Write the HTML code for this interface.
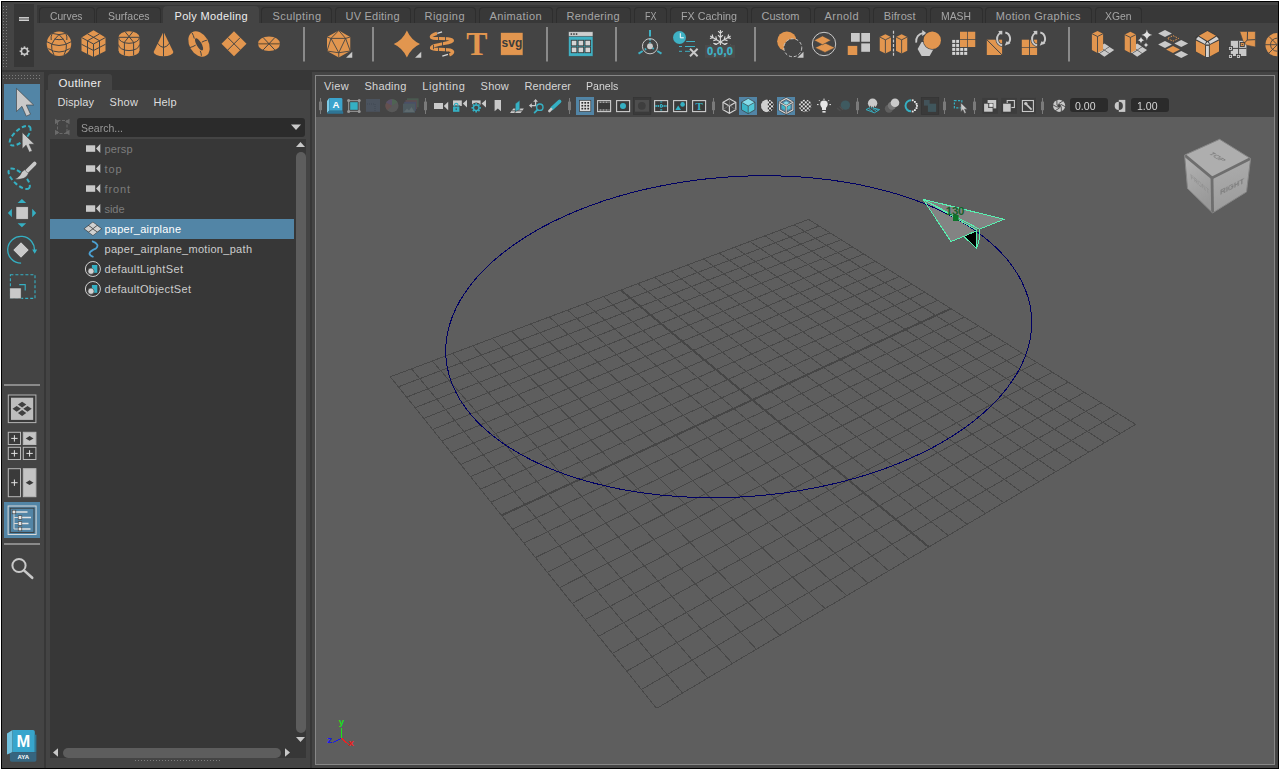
<!DOCTYPE html><html><head><meta charset="utf-8"><title>Maya</title><style>html,body{margin:0;padding:0}body{width:1280px;height:770px;background:#fff;position:relative;overflow:hidden;font-family:"Liberation Sans",sans-serif}</style></head><body>
<div style="position:absolute;left:1px;top:1px;width:1278px;height:768px;background:#000;"></div>
<div style="position:absolute;left:2px;top:2px;width:1276px;height:766px;background:#444;"></div>
<div style="position:absolute;left:14px;top:4px;width:20px;height:63px;background:#373737;"></div>
<div style="position:absolute;left:37px;top:5px;width:1241px;height:18px;background:#383838;"></div>
<div style="position:absolute;left:39px;top:7px;width:54px;height:15px;background:#383838;border:1px solid #2e2e2e;border-bottom:none;border-radius:4px 4px 0 0;"></div>
<span style="position:absolute;left:50.00px;top:6.19px;line-height:20px;font-size:11px;font-family:'Liberation Sans',sans-serif;color:#a6a6a6;letter-spacing:0.000px;white-space:pre;transform:scaleX(0.9328);transform-origin:0 0;">Curves</span>
<div style="position:absolute;left:96px;top:7px;width:63px;height:15px;background:#383838;border:1px solid #2e2e2e;border-bottom:none;border-radius:4px 4px 0 0;"></div>
<span style="position:absolute;left:108.00px;top:6.19px;line-height:20px;font-size:11px;font-family:'Liberation Sans',sans-serif;color:#a6a6a6;letter-spacing:0.000px;white-space:pre;transform:scaleX(0.9560);transform-origin:0 0;">Surfaces</span>
<div style="position:absolute;left:163px;top:6px;width:96px;height:17px;background:#444;border-radius:4px 4px 0 0;"></div>
<span style="position:absolute;left:174.50px;top:6.19px;line-height:20px;font-size:11px;font-family:'Liberation Sans',sans-serif;color:#eeeeee;letter-spacing:0.325px;white-space:pre;">Poly Modeling</span>
<div style="position:absolute;left:261px;top:7px;width:69px;height:15px;background:#383838;border:1px solid #2e2e2e;border-bottom:none;border-radius:4px 4px 0 0;"></div>
<span style="position:absolute;left:272.50px;top:6.19px;line-height:20px;font-size:11px;font-family:'Liberation Sans',sans-serif;color:#a6a6a6;letter-spacing:0.406px;white-space:pre;">Sculpting</span>
<div style="position:absolute;left:335px;top:7px;width:74px;height:15px;background:#383838;border:1px solid #2e2e2e;border-bottom:none;border-radius:4px 4px 0 0;"></div>
<span style="position:absolute;left:345.50px;top:6.19px;line-height:20px;font-size:11px;font-family:'Liberation Sans',sans-serif;color:#a6a6a6;letter-spacing:0.225px;white-space:pre;">UV Editing</span>
<div style="position:absolute;left:414px;top:7px;width:60px;height:15px;background:#383838;border:1px solid #2e2e2e;border-bottom:none;border-radius:4px 4px 0 0;"></div>
<span style="position:absolute;left:424.50px;top:6.19px;line-height:20px;font-size:11px;font-family:'Liberation Sans',sans-serif;color:#a6a6a6;letter-spacing:0.450px;white-space:pre;">Rigging</span>
<div style="position:absolute;left:479px;top:7px;width:72px;height:15px;background:#383838;border:1px solid #2e2e2e;border-bottom:none;border-radius:4px 4px 0 0;"></div>
<span style="position:absolute;left:489.50px;top:6.19px;line-height:20px;font-size:11px;font-family:'Liberation Sans',sans-serif;color:#a6a6a6;letter-spacing:0.386px;white-space:pre;">Animation</span>
<div style="position:absolute;left:556px;top:7px;width:73px;height:15px;background:#383838;border:1px solid #2e2e2e;border-bottom:none;border-radius:4px 4px 0 0;"></div>
<span style="position:absolute;left:566.50px;top:6.19px;line-height:20px;font-size:11px;font-family:'Liberation Sans',sans-serif;color:#a6a6a6;letter-spacing:0.280px;white-space:pre;">Rendering</span>
<div style="position:absolute;left:634px;top:7px;width:31px;height:15px;background:#383838;border:1px solid #2e2e2e;border-bottom:none;border-radius:4px 4px 0 0;"></div>
<span style="position:absolute;left:644.50px;top:6.19px;line-height:20px;font-size:11px;font-family:'Liberation Sans',sans-serif;color:#a6a6a6;letter-spacing:0.000px;white-space:pre;transform:scaleX(0.8181);transform-origin:0 0;">FX</span>
<div style="position:absolute;left:670px;top:7px;width:76px;height:15px;background:#383838;border:1px solid #2e2e2e;border-bottom:none;border-radius:4px 4px 0 0;"></div>
<span style="position:absolute;left:680.50px;top:6.19px;line-height:20px;font-size:11px;font-family:'Liberation Sans',sans-serif;color:#a6a6a6;letter-spacing:0.000px;white-space:pre;transform:scaleX(0.9744);transform-origin:0 0;">FX Caching</span>
<div style="position:absolute;left:751px;top:7px;width:58px;height:15px;background:#383838;border:1px solid #2e2e2e;border-bottom:none;border-radius:4px 4px 0 0;"></div>
<span style="position:absolute;left:761.50px;top:6.19px;line-height:20px;font-size:11px;font-family:'Liberation Sans',sans-serif;color:#a6a6a6;letter-spacing:0.020px;white-space:pre;">Custom</span>
<div style="position:absolute;left:814px;top:7px;width:54px;height:15px;background:#383838;border:1px solid #2e2e2e;border-bottom:none;border-radius:4px 4px 0 0;"></div>
<span style="position:absolute;left:824.50px;top:6.19px;line-height:20px;font-size:11px;font-family:'Liberation Sans',sans-serif;color:#a6a6a6;letter-spacing:0.441px;white-space:pre;">Arnold</span>
<div style="position:absolute;left:873px;top:7px;width:52px;height:15px;background:#383838;border:1px solid #2e2e2e;border-bottom:none;border-radius:4px 4px 0 0;"></div>
<span style="position:absolute;left:883.75px;top:6.19px;line-height:20px;font-size:11px;font-family:'Liberation Sans',sans-serif;color:#a6a6a6;letter-spacing:0.096px;white-space:pre;">Bifrost</span>
<div style="position:absolute;left:930px;top:7px;width:51px;height:15px;background:#383838;border:1px solid #2e2e2e;border-bottom:none;border-radius:4px 4px 0 0;"></div>
<span style="position:absolute;left:940.50px;top:6.19px;line-height:20px;font-size:11px;font-family:'Liberation Sans',sans-serif;color:#a6a6a6;letter-spacing:0.000px;white-space:pre;transform:scaleX(0.9440);transform-origin:0 0;">MASH</span>
<div style="position:absolute;left:985px;top:7px;width:105px;height:15px;background:#383838;border:1px solid #2e2e2e;border-bottom:none;border-radius:4px 4px 0 0;"></div>
<span style="position:absolute;left:995.75px;top:6.19px;line-height:20px;font-size:11px;font-family:'Liberation Sans',sans-serif;color:#a6a6a6;letter-spacing:0.333px;white-space:pre;">Motion Graphics</span>
<div style="position:absolute;left:1095px;top:7px;width:45px;height:15px;background:#383838;border:1px solid #2e2e2e;border-bottom:none;border-radius:4px 4px 0 0;"></div>
<span style="position:absolute;left:1105.00px;top:6.19px;line-height:20px;font-size:11px;font-family:'Liberation Sans',sans-serif;color:#a6a6a6;letter-spacing:0.000px;white-space:pre;transform:scaleX(0.9421);transform-origin:0 0;">XGen</span>
<div style="position:absolute;left:2px;top:70px;width:1276px;height:2px;background:#373737;"></div>
<div style="position:absolute;left:2px;top:72px;width:42px;height:696px;background:#444;"></div>
<div style="position:absolute;left:44px;top:72px;width:2px;height:696px;background:#373737;"></div>
<div style="position:absolute;left:46px;top:72px;width:264px;height:18px;background:#373737;"></div>
<div style="position:absolute;left:48px;top:74px;width:64px;height:16px;background:#444;border-radius:3px 3px 0 0;"></div>
<span style="position:absolute;left:58.50px;top:72.52px;line-height:20px;font-size:11.5px;font-family:'Liberation Sans',sans-serif;color:#eeeeee;letter-spacing:0.319px;white-space:pre;">Outliner</span>
<div style="position:absolute;left:46px;top:90px;width:264px;height:678px;background:#444;"></div>
<div style="position:absolute;left:310px;top:72px;width:2px;height:696px;background:#373737;"></div>
<span style="position:absolute;left:57.50px;top:91.69px;line-height:20px;font-size:11px;font-family:'Liberation Sans',sans-serif;color:#dddddd;letter-spacing:0.072px;white-space:pre;">Display</span>
<span style="position:absolute;left:109.50px;top:91.69px;line-height:20px;font-size:11px;font-family:'Liberation Sans',sans-serif;color:#dddddd;letter-spacing:0.328px;white-space:pre;">Show</span>
<span style="position:absolute;left:153.50px;top:91.69px;line-height:20px;font-size:11px;font-family:'Liberation Sans',sans-serif;color:#dddddd;letter-spacing:0.126px;white-space:pre;">Help</span>
<div style="position:absolute;left:77px;top:118px;width:228px;height:19px;background:#2b2b2b;border-radius:3px;"></div>
<span style="position:absolute;left:80.50px;top:117.69px;line-height:20px;font-size:11px;font-family:'Liberation Sans',sans-serif;color:#999999;letter-spacing:0.000px;white-space:pre;transform:scaleX(0.9541);transform-origin:0 0;">Search...</span>
<div style="position:absolute;left:50px;top:139px;width:256px;height:619px;background:#373737;"></div>
<div style="position:absolute;left:50px;top:219px;width:244px;height:20px;background:#5285a6;"></div>
<span style="position:absolute;left:104.50px;top:138.69px;line-height:20px;font-size:11px;font-family:'Liberation Sans',sans-serif;color:#7d7d7d;letter-spacing:0.121px;white-space:pre;">persp</span>
<span style="position:absolute;left:104.50px;top:158.69px;line-height:20px;font-size:11px;font-family:'Liberation Sans',sans-serif;color:#7d7d7d;letter-spacing:0.854px;white-space:pre;">top</span>
<span style="position:absolute;left:104.50px;top:178.69px;line-height:20px;font-size:11px;font-family:'Liberation Sans',sans-serif;color:#7d7d7d;letter-spacing:0.872px;white-space:pre;">front</span>
<span style="position:absolute;left:104.50px;top:198.69px;line-height:20px;font-size:11px;font-family:'Liberation Sans',sans-serif;color:#7d7d7d;letter-spacing:-0.060px;white-space:pre;">side</span>
<span style="position:absolute;left:104.50px;top:218.69px;line-height:20px;font-size:11px;font-family:'Liberation Sans',sans-serif;color:#ffffff;letter-spacing:0.239px;white-space:pre;">paper_airplane</span>
<span style="position:absolute;left:104.50px;top:238.69px;line-height:20px;font-size:11px;font-family:'Liberation Sans',sans-serif;color:#cccccc;letter-spacing:0.298px;white-space:pre;">paper_airplane_motion_path</span>
<span style="position:absolute;left:104.50px;top:258.69px;line-height:20px;font-size:11px;font-family:'Liberation Sans',sans-serif;color:#cccccc;letter-spacing:0.365px;white-space:pre;">defaultLightSet</span>
<span style="position:absolute;left:104.50px;top:278.69px;line-height:20px;font-size:11px;font-family:'Liberation Sans',sans-serif;color:#cccccc;letter-spacing:0.345px;white-space:pre;">defaultObjectSet</span>
<div style="position:absolute;left:296px;top:152px;width:10px;height:581px;background:#5d5d5d;border-radius:5px;"></div>
<div style="position:absolute;left:63px;top:748px;width:218px;height:10px;background:#5d5d5d;border-radius:5px;"></div>
<div style="position:absolute;left:312px;top:72px;width:966px;height:696px;background:#444;"></div>
<div style="position:absolute;left:315px;top:75px;width:960px;height:690px;background:#444;box-sizing:border-box;border:1px solid #878787;"></div>
<div style="position:absolute;left:316px;top:117px;width:958px;height:647px;background:#5e5e5e;"></div>
<span style="position:absolute;left:324.10px;top:76.19px;line-height:20px;font-size:11px;font-family:'Liberation Sans',sans-serif;color:#d6d6d6;letter-spacing:0.335px;white-space:pre;">View</span>
<span style="position:absolute;left:364.50px;top:76.19px;line-height:20px;font-size:11px;font-family:'Liberation Sans',sans-serif;color:#d6d6d6;letter-spacing:0.230px;white-space:pre;">Shading</span>
<span style="position:absolute;left:422.25px;top:76.19px;line-height:20px;font-size:11px;font-family:'Liberation Sans',sans-serif;color:#d6d6d6;letter-spacing:0.567px;white-space:pre;">Lighting</span>
<span style="position:absolute;left:480.60px;top:76.19px;line-height:20px;font-size:11px;font-family:'Liberation Sans',sans-serif;color:#d6d6d6;letter-spacing:0.195px;white-space:pre;">Show</span>
<span style="position:absolute;left:524.50px;top:76.19px;line-height:20px;font-size:11px;font-family:'Liberation Sans',sans-serif;color:#d6d6d6;letter-spacing:0.092px;white-space:pre;">Renderer</span>
<span style="position:absolute;left:586.30px;top:76.19px;line-height:20px;font-size:11px;font-family:'Liberation Sans',sans-serif;color:#d6d6d6;letter-spacing:0.000px;white-space:pre;transform:scaleX(0.9603);transform-origin:0 0;">Panels</span>
<div style="position:absolute;left:1070px;top:98px;width:38px;height:14px;background:#2b2b2b;border-radius:3px;"></div>
<div style="position:absolute;left:1131px;top:98px;width:38px;height:14px;background:#2b2b2b;border-radius:3px;"></div>
<span style="position:absolute;left:1075.20px;top:96.19px;line-height:20px;font-size:11px;font-family:'Liberation Sans',sans-serif;color:#d6d6d6;letter-spacing:0.000px;white-space:pre;transform:scaleX(0.9575);transform-origin:0 0;">0.00</span>
<span style="position:absolute;left:1137.00px;top:96.19px;line-height:20px;font-size:11px;font-family:'Liberation Sans',sans-serif;color:#d6d6d6;letter-spacing:0.000px;white-space:pre;transform:scaleX(0.9575);transform-origin:0 0;">1.00</span>
<svg style="position:absolute;left:316px;top:117px" width="958" height="647" viewBox="316 117 958 647">
<path d="M390.3 376.8L656.6 708.4M390.3 376.8L808.6 219.4M411.5 368.8L682.5 693.0M398.4 386.8L819.2 226.0M432.3 361.0L707.8 678.0M406.6 397.1L830.0 232.8M452.7 353.3L732.4 663.4M415.1 407.7L841.0 239.7M472.7 345.8L756.4 649.2M423.7 418.4L852.3 246.8M492.4 338.4L779.8 635.3M432.6 429.5L863.7 254.0M511.7 331.1L802.7 621.8M441.7 440.9L875.4 261.3M530.7 324.0L825.0 608.6M451.1 452.5L887.3 268.8M549.4 316.9L846.7 595.7M460.7 464.4L899.5 276.4M567.7 310.1L868.0 583.1M470.5 476.7L912.0 284.2M585.7 303.3L888.7 570.8M480.6 489.2L924.7 292.2M603.4 296.6L909.0 558.8M491.0 502.1L937.6 300.3M637.9 283.6L948.2 535.5M512.6 529.0L964.4 317.1M654.7 277.3L967.1 524.3M523.8 543.1L978.3 325.8M671.2 271.1L985.6 513.3M535.4 557.5L992.4 334.6M687.5 265.0L1003.7 502.6M547.3 572.3L1006.9 343.7M703.5 258.9L1021.5 492.1M559.6 587.6L1021.7 353.0M719.2 253.0L1038.8 481.8M572.2 603.3L1036.8 362.5M734.7 247.2L1055.8 471.7M585.2 619.5L1052.3 372.2M750.0 241.5L1072.4 461.9M598.6 636.2L1068.2 382.1M765.0 235.8L1088.7 452.2M612.4 653.4L1084.4 392.3M779.7 230.3L1104.7 442.7M626.7 671.1L1101.1 402.8M794.3 224.8L1120.3 433.5M641.4 689.5L1118.1 413.4M808.6 219.4L1135.6 424.4M656.6 708.4L1135.6 424.4" stroke="#484848" stroke-width="1" fill="none" shape-rendering="crispEdges"/>
<path d="M620.8 290.1L928.8 547.0M501.6 515.4L950.9 308.6" stroke="#464646" stroke-width="2" fill="none" shape-rendering="crispEdges"/>
<g shape-rendering="crispEdges"><polygon points="923.10,199.20 1003.90,219.30 979.40,229.20" fill="#838383" stroke="none" stroke-width="1" /><polygon points="923.10,199.20 950.90,241.50 963.90,236.40 976.40,230.90 977.00,228.00" fill="#838383" stroke="none" stroke-width="1" /><polygon points="923.10,199.20 977.00,228.00 979.40,229.20" fill="#7a7a7a" stroke="none" stroke-width="1" /></g>
<path d="M1031.7 322.5L1031.3 330.9L1030.1 339.4L1028.1 347.8L1025.3 356.2L1021.7 364.5L1017.4 372.8L1012.2 380.9L1006.4 389.0L999.8 396.9L992.4 404.6L984.4 412.2L975.7 419.5L966.4 426.6L956.4 433.5L945.9 440.1L934.8 446.4L923.1 452.4L910.9 458.1L898.3 463.5L885.2 468.5L871.7 473.2L857.9 477.4L843.7 481.3L829.2 484.8L814.5 487.9L799.6 490.6L784.5 492.9L769.3 494.7L754.0 496.1L738.7 497.1L723.4 497.6L708.1 497.7L692.9 497.3L677.8 496.5L662.9 495.3L648.2 493.6L633.7 491.5L619.5 489.0L605.7 486.0L592.2 482.7L579.1 478.9L566.5 474.8L554.3 470.3L542.6 465.4L531.5 460.1L521.0 454.5L511.0 448.6L501.7 442.4L493.0 435.9L485.0 429.2L477.6 422.1L471.0 414.9L465.2 407.4L460.0 399.7L455.7 391.9L452.1 383.9L449.3 375.8L447.3 367.6L446.1 359.2L445.7 350.9L446.1 342.5L447.3 334.0L449.3 325.6L452.1 317.2L455.7 308.9L460.0 300.6L465.2 292.5L471.0 284.4L477.6 276.5L485.0 268.8L493.0 261.2L501.7 253.9L511.0 246.8L521.0 239.9L531.5 233.3L542.6 227.0L554.3 221.0L566.5 215.3L579.1 209.9L592.2 204.9L605.7 200.2L619.5 196.0L633.7 192.1L648.2 188.6L662.9 185.5L677.8 182.8L692.9 180.5L708.1 178.7L723.4 177.3L738.7 176.3L754.0 175.8L769.3 175.7L784.5 176.1L799.6 176.9L814.5 178.1L829.2 179.8L843.7 181.9L857.9 184.4L871.7 187.4L885.2 190.7L898.3 194.5L910.9 198.6L923.1 203.1L934.8 208.0L945.9 213.3L956.4 218.9L966.4 224.8L975.7 231.0L984.4 237.5L992.4 244.2L999.8 251.3L1006.4 258.5L1012.2 266.0L1017.4 273.7L1021.7 281.5L1025.3 289.5L1028.1 297.6L1030.1 305.8L1031.3 314.2L1031.7 322.5Z" stroke="#000064" stroke-width="1" fill="none" shape-rendering="crispEdges"/>
<g shape-rendering="crispEdges">
<polygon points="963.90,236.40 976.40,230.90 976.70,248.60" fill="#000" stroke="none" stroke-width="1" />
<polyline points="923.10,199.20 1003.90,219.30 979.40,229.20 923.10,199.20" fill="none" stroke="#58f0b0" stroke-width="1" />
<polyline points="923.10,199.20 950.90,241.50 963.90,236.40" fill="none" stroke="#58f0b0" stroke-width="1" />
<polyline points="923.10,199.20 977.30,230.50" fill="none" stroke="#58f0b0" stroke-width="1" />
<polyline points="963.90,236.40 976.40,230.90 976.70,248.60 963.90,236.40" fill="none" stroke="#58f0b0" stroke-width="1" />
<polyline points="979.40,229.20 979.20,239.50 976.70,248.60" fill="none" stroke="#58f0b0" stroke-width="1" />
</g>
<text x="945.8" y="214.6" font-family="'Liberation Sans',sans-serif" font-weight="bold" font-size="11.5" fill="#176029" letter-spacing="-0.3">130</text>
<rect x="953" y="215" width="5.6" height="6" fill="#0f7428"/>
<defs><filter id="vcb" x="-10%" y="-10%" width="120%" height="120%"><feGaussianBlur stdDeviation="0.55"/></filter><filter id="vct" x="-20%" y="-20%" width="140%" height="140%"><feGaussianBlur stdDeviation="0.45"/></filter><linearGradient id="vcl" x1="0" y1="0" x2="0.3" y2="1"><stop offset="0" stop-color="#b4b4b4"/><stop offset="1" stop-color="#989898"/></linearGradient><linearGradient id="vcr" x1="0" y1="0" x2="0.2" y2="1"><stop offset="0" stop-color="#aeaeae"/><stop offset="1" stop-color="#9c9c9c"/></linearGradient></defs>
<g filter="url(#vcb)">
<polygon points="1219.60,139.30 1250.60,158.60 1212.00,177.90 1184.60,155.10" fill="#aeaeae" stroke="none" stroke-width="1" />
<polygon points="1184.60,155.10 1212.00,177.90 1212.60,212.90 1187.50,188.40" fill="url(#vcl)" stroke="none" stroke-width="1" />
<polygon points="1212.00,177.90 1250.60,158.60 1246.50,191.90 1212.60,212.90" fill="url(#vcr)" stroke="none" stroke-width="1" />
<polyline points="1184.60,155.10 1212.00,177.90 1250.60,158.60" fill="none" stroke="#6e6e6e" stroke-width="2.8" /><polyline points="1212.00,177.90 1212.60,212.90" fill="none" stroke="#6e6e6e" stroke-width="2.8" />
<polygon points="1219.60,139.30 1250.60,158.60 1246.50,191.90 1212.60,212.90 1187.50,188.40 1184.60,155.10" fill="none" stroke="#858585" stroke-width="1" />
</g>
<text transform="matrix(0.7750 0.4825 -0.8750 0.3950 1219.6 139.3)" x="20" y="23" font-family="'Liberation Sans',sans-serif" font-weight="normal" font-size="8.3" text-anchor="middle" fill="#6a6a6a" filter="url(#vct)">TOP</text>
<text transform="matrix(0.9650 -0.4825 0.0150 0.8750 1212 177.9)" x="20.5" y="23.5" font-family="'Liberation Sans',sans-serif" font-weight="bold" font-size="8" text-anchor="middle" fill="#7c7c7c" filter="url(#vct)">RIGHT</text>
<text transform="matrix(0.6850 0.5700 0.0725 0.8325 1184.6 155.1)" x="20" y="23.5" font-family="'Liberation Sans',sans-serif" font-weight="bold" font-size="8" text-anchor="middle" fill="#929292" filter="url(#vct)">FRONT</text>
<g shape-rendering="crispEdges" stroke-width="1" fill="none"><path d="M341.5 738 L341.5 728" stroke="#19e619"/><path d="M341.5 738.2 L333 742.6" stroke="#1818f0"/><path d="M341.5 738.2 L349 745" stroke="#f02020"/></g>
<text x="341.4" y="725.1" font-family="'Liberation Sans',sans-serif" font-weight="bold" font-size="9.6" text-anchor="middle" fill="#19e619">y</text><text x="329.6" y="743.4" font-family="'Liberation Sans',sans-serif" font-weight="bold" font-size="9.6" text-anchor="middle" fill="#1818f0">z</text><text x="351.2" y="745.5" font-family="'Liberation Sans',sans-serif" font-weight="bold" font-size="9.6" text-anchor="middle" fill="#f02020">x</text>
</svg>
<svg style="position:absolute;left:0;top:0" width="1280" height="770" viewBox="0 0 1280 770"><defs><clipPath id="shelfclip"><rect x="0" y="0" width="1277.3" height="770"/></clipPath></defs>
<rect x="3" y="6" width="1" height="1" fill="#7c7c7c"/>
<rect x="6" y="6" width="1" height="1" fill="#7c7c7c"/>
<rect x="3" y="9" width="1" height="1" fill="#7c7c7c"/>
<rect x="6" y="9" width="1" height="1" fill="#7c7c7c"/>
<rect x="3" y="12" width="1" height="1" fill="#7c7c7c"/>
<rect x="6" y="12" width="1" height="1" fill="#7c7c7c"/>
<rect x="3" y="15" width="1" height="1" fill="#7c7c7c"/>
<rect x="6" y="15" width="1" height="1" fill="#7c7c7c"/>
<rect x="3" y="18" width="1" height="1" fill="#7c7c7c"/>
<rect x="6" y="18" width="1" height="1" fill="#7c7c7c"/>
<rect x="3" y="21" width="1" height="1" fill="#7c7c7c"/>
<rect x="6" y="21" width="1" height="1" fill="#7c7c7c"/>
<rect x="3" y="24" width="1" height="1" fill="#7c7c7c"/>
<rect x="6" y="24" width="1" height="1" fill="#7c7c7c"/>
<rect x="3" y="27" width="1" height="1" fill="#7c7c7c"/>
<rect x="6" y="27" width="1" height="1" fill="#7c7c7c"/>
<rect x="3" y="30" width="1" height="1" fill="#7c7c7c"/>
<rect x="6" y="30" width="1" height="1" fill="#7c7c7c"/>
<rect x="3" y="33" width="1" height="1" fill="#7c7c7c"/>
<rect x="6" y="33" width="1" height="1" fill="#7c7c7c"/>
<rect x="3" y="36" width="1" height="1" fill="#7c7c7c"/>
<rect x="6" y="36" width="1" height="1" fill="#7c7c7c"/>
<rect x="3" y="39" width="1" height="1" fill="#7c7c7c"/>
<rect x="6" y="39" width="1" height="1" fill="#7c7c7c"/>
<rect x="3" y="42" width="1" height="1" fill="#7c7c7c"/>
<rect x="6" y="42" width="1" height="1" fill="#7c7c7c"/>
<rect x="3" y="45" width="1" height="1" fill="#7c7c7c"/>
<rect x="6" y="45" width="1" height="1" fill="#7c7c7c"/>
<rect x="3" y="48" width="1" height="1" fill="#7c7c7c"/>
<rect x="6" y="48" width="1" height="1" fill="#7c7c7c"/>
<rect x="3" y="51" width="1" height="1" fill="#7c7c7c"/>
<rect x="6" y="51" width="1" height="1" fill="#7c7c7c"/>
<rect x="3" y="54" width="1" height="1" fill="#7c7c7c"/>
<rect x="6" y="54" width="1" height="1" fill="#7c7c7c"/>
<rect x="3" y="57" width="1" height="1" fill="#7c7c7c"/>
<rect x="6" y="57" width="1" height="1" fill="#7c7c7c"/>
<rect x="3" y="60" width="1" height="1" fill="#7c7c7c"/>
<rect x="6" y="60" width="1" height="1" fill="#7c7c7c"/>
<rect x="3" y="63" width="1" height="1" fill="#7c7c7c"/>
<rect x="6" y="63" width="1" height="1" fill="#7c7c7c"/>
<rect x="3" y="66" width="1" height="1" fill="#7c7c7c"/>
<rect x="6" y="66" width="1" height="1" fill="#7c7c7c"/>
<rect x="19" y="17" width="10" height="4" fill="#8c8c8c"/><rect x="19" y="17" width="10" height="1" fill="#c8c8c8"/><rect x="19" y="20" width="10" height="1" fill="#d0d0d0"/>
<line x1="27.50" y1="51.25" x2="29.40" y2="51.25" stroke="#c9c9c9" stroke-width="1.6"/><line x1="26.62" y1="53.37" x2="27.96" y2="54.71" stroke="#c9c9c9" stroke-width="1.6"/><line x1="24.50" y1="54.25" x2="24.50" y2="56.15" stroke="#c9c9c9" stroke-width="1.6"/><line x1="22.38" y1="53.37" x2="21.04" y2="54.71" stroke="#c9c9c9" stroke-width="1.6"/><line x1="21.50" y1="51.25" x2="19.60" y2="51.25" stroke="#c9c9c9" stroke-width="1.6"/><line x1="22.38" y1="49.13" x2="21.04" y2="47.79" stroke="#c9c9c9" stroke-width="1.6"/><line x1="24.50" y1="48.25" x2="24.50" y2="46.35" stroke="#c9c9c9" stroke-width="1.6"/><line x1="26.62" y1="49.13" x2="27.96" y2="47.79" stroke="#c9c9c9" stroke-width="1.6"/><circle cx="24.5" cy="51.25" r="3.1" fill="none" stroke="#c9c9c9" stroke-width="1.5"/>
<circle cx="59" cy="43.75" r="12.25" fill="#e2964f"/>
<g fill="none" stroke="#444444" stroke-width="1"><path d="M47 41.8 Q59 49.2 71 41.8"/><path d="M48.3 48.6 Q59 55.4 69.7 48.6"/><path d="M54.4 39.1 Q59 40.3 63.6 39.1"/><path d="M52.2 33.4 L59 34.6 L65.8 33.4"/><path d="M59 34.6 Q54 39 51.6 44.5 Q51 50 54 55"/><path d="M59 34.6 Q64 39 66.4 44.5 Q67 50 64 55"/><path d="M52.2 33.4 Q50.5 37 51.2 40"/><path d="M65.8 33.4 Q67.5 37 66.8 40"/></g>
<polygon points="93.50,30.25 105.50,37.50 105.50,51.00 93.50,57.00 81.50,51.00 81.50,37.50" fill="#e2964f" stroke="none" stroke-width="1" />
<g><polyline points="81.50,37.50 93.50,44.00 105.50,37.50" fill="none" stroke="#444444" stroke-width="1" /><polyline points="93.50,44.00 93.50,57.00" fill="none" stroke="#444444" stroke-width="1" /><polyline points="87.50,33.88 99.50,40.75" fill="none" stroke="#444444" stroke-width="1" /><polyline points="99.50,33.88 87.50,40.75" fill="none" stroke="#444444" stroke-width="1" /><polyline points="81.50,44.25 93.50,50.50" fill="none" stroke="#444444" stroke-width="1" /><polyline points="87.50,40.75 87.50,54.00" fill="none" stroke="#444444" stroke-width="1" /><polyline points="105.50,44.25 93.50,50.50" fill="none" stroke="#444444" stroke-width="1" /><polyline points="99.50,40.75 99.50,54.00" fill="none" stroke="#444444" stroke-width="1" /></g>
<path d="M118.5 37.3 A10.5 6 0 0 1 139.5 37.3 L139.5 50.3 A10.5 6 0 0 1 118.5 50.3 Z" fill="#e2964f"/>
<g fill="none" stroke="#444444" stroke-width="1"><path d="M118.5 37.3 A10.5 6 0 0 0 139.5 37.3"/><path d="M118.5 44.6 A10.5 6 0 0 0 139.5 44.6"/><path d="M124.4 42.3 L124.4 55.4"/><path d="M133.6 42.3 L133.6 55.4"/><path d="M118.5 37.3 L139.5 37.3 M125.2 31.8 L133.6 42.3 M132.8 31.8 L124.4 42.3"/></g>
<path d="M163.5 31.7 L173.4 52 A9.9 4.2 0 0 1 153.6 52 Z" fill="#e2964f"/>
<g fill="none" stroke="#444444" stroke-width="1"><path d="M163.5 31.5 L163.5 56.4"/><path d="M157.2 42.8 Q163.5 52 169.8 42.8"/></g>
<g transform="rotate(-30 199 44)"><ellipse cx="199" cy="44" rx="9.5" ry="13.7" fill="#e2964f"/><ellipse cx="198.9" cy="44.3" rx="2.5" ry="6.9" fill="#444444"/></g><g stroke="#444444" stroke-width="1" fill="none"><path d="M192.1 32.9 Q193.6 35.5 194.3 38.6"/><path d="M201.8 42.2 Q204 40.8 206.9 40.2"/><path d="M190 47.5 Q193 46.8 195.7 45.1"/><path d="M200.2 50.8 Q201.3 53 201.4 55.8"/></g>
<polygon points="234.00,31.25 246.50,43.75 234.00,56.25 221.50,43.75" fill="#e2964f" stroke="none" stroke-width="1" />
<polyline points="227.75,37.50 240.25,50.00" fill="none" stroke="#444444" stroke-width="1" /><polyline points="240.25,37.50 227.75,50.00" fill="none" stroke="#444444" stroke-width="1" />
<ellipse cx="269" cy="43.75" rx="11" ry="7.25" fill="#e2964f"/>
<g stroke="#444444" fill="none"><path d="M258 43.75 L280 43.75" stroke="#8a6238" stroke-width="1.6"/><path d="M263.2 37.6 L274.8 49.9 M274.8 37.6 L263.2 49.9" stroke-width="1"/></g>
<rect x="303" y="27" width="2" height="34.5" fill="#8a8a8a"/>
<polygon points="338.75,30.50 350.25,37.00 350.25,51.00 338.75,57.50 327.00,51.00 327.00,37.00" fill="#e2964f" stroke="none" stroke-width="1" />
<g><polyline points="331.00,38.40 345.60,38.40 338.75,52.75 331.00,38.40" fill="none" stroke="#444444" stroke-width="0.9" /><polyline points="331.00,38.40 338.75,30.50 345.60,38.40" fill="none" stroke="#444444" stroke-width="0.9" /><polyline points="327.00,37.00 331.00,38.40 327.00,51.00 338.75,52.75 350.25,51.00 345.60,38.40 350.25,37.00" fill="none" stroke="#444444" stroke-width="0.9" /><polyline points="338.75,52.75 338.75,57.50" fill="none" stroke="#444444" stroke-width="0.9" /></g>
<polygon points="346.00,57.75 352.25,57.75 352.25,51.75" fill="#c9c9c9" stroke="none" stroke-width="1" />
<rect x="372" y="27" width="2" height="34.5" fill="#8a8a8a"/>
<path d="M406.9 30.5 Q411.0 39.9 420 44 Q411.0 48.1 406.9 57.5 Q402.79999999999995 48.1 393.75 44 Q402.79999999999995 39.9 406.9 30.5Z" fill="#e2964f"/>
<polygon points="415.00,57.75 421.25,57.75 421.25,51.75" fill="#c9c9c9" stroke="none" stroke-width="1" />
<path d="M437 33.4 C433 34.3 430.8 36 431.5 37.4 C432.6 39.4 447 37.6 451.6 39.6 C454.6 41.1 449.5 42.5 444 43.5 C437 44.8 430.8 46.2 431.5 48.2 C432.6 50.3 447 48.6 451.6 50.7 C454 52 452 53.8 449.3 54.9" fill="none" stroke="#444444" stroke-width="4.3" stroke-linecap="butt"/><path d="M437 33.4 C433 34.3 430.8 36 431.5 37.4 C432.6 39.4 447 37.6 451.6 39.6 C454.6 41.1 449.5 42.5 444 43.5 C437 44.8 430.8 46.2 431.5 48.2 C432.6 50.3 447 48.6 451.6 50.7 C454 52 452 53.8 449.3 54.9" fill="none" stroke="#e2964f" stroke-width="3.2"/>
<g stroke="#444444" stroke-width="0.9"><path d="M438.5 36 L438.5 40.8 M445.5 36.2 L445.5 41 M442.5 41.6 L442.5 46 M433.5 44.8 L433.5 49.2 M438.5 47.2 L438.5 52 M445.5 47.4 L445.5 52.2 M448.6 51.6 L448.6 56"/></g>
<path d="M437.3 33.4 L442 31.9" stroke="#d8d8d8" stroke-width="1.4"/><path d="M442.3 56.1 L448 54.4" stroke="#d8d8d8" stroke-width="1.4"/>
<text x="476.9" y="54.9" font-family="'Liberation Serif',serif" font-weight="bold" font-size="33.5" text-anchor="middle" fill="#e2964f" stroke="#444444" stroke-width="1.1" paint-order="stroke" transform="translate(476.9 0) scale(0.95 1) translate(-476.9 0)">T</text>
<rect x="500.6" y="32.5" width="22.4" height="22.75" fill="#e2964f" stroke="#444444" stroke-width="0.6"/>
<text x="511.9" y="47.3" font-family="'Liberation Sans',sans-serif" font-weight="bold" font-size="12" text-anchor="middle" fill="#3c3c3c">svg</text>
<rect x="546" y="27" width="2" height="34.5" fill="#8a8a8a"/>
<rect x="568.5" y="31.75" width="24.5" height="24.5" fill="#3fb1c4" stroke="#444444" stroke-width="0.6"/>
<rect x="568.5" y="31.75" width="24.5" height="4.5" fill="#cfcfcf" stroke="#444444" stroke-width="0.6"/>
<rect x="570.6" y="33.3" width="1.5" height="1.5" fill="#333"/>
<rect x="573.2" y="33.3" width="1.5" height="1.5" fill="#333"/>
<rect x="575.8" y="33.3" width="1.5" height="1.5" fill="#333"/>
<rect x="571.25" y="40.25" width="5.6" height="5.6" fill="#d4d4d4" stroke="#3a3a3a" stroke-width="0.9"/>
<rect x="571.25" y="47.1" width="5.6" height="5.6" fill="#d4d4d4" stroke="#3a3a3a" stroke-width="0.9"/>
<rect x="578.1" y="40.25" width="5.6" height="5.6" fill="#d4d4d4" stroke="#3a3a3a" stroke-width="0.9"/>
<rect x="578.1" y="47.1" width="5.6" height="5.6" fill="#d4d4d4" stroke="#3a3a3a" stroke-width="0.9"/>
<rect x="585" y="40.25" width="5.6" height="5.6" fill="#d4d4d4" stroke="#3a3a3a" stroke-width="0.9"/>
<rect x="585" y="47.1" width="5.6" height="5.6" fill="#d4d4d4" stroke="#3a3a3a" stroke-width="0.9"/>
<rect x="615" y="27" width="2" height="34.5" fill="#8a8a8a"/>
<g stroke="#3fb1c4" stroke-width="2" fill="none"><path d="M650 30 L650 36.5"/><path d="M638.5 53.6 L642.7 51"/><path d="M657.3 51 L661.5 53.6"/></g>
<g stroke="#3fb1c4" stroke-width="2" fill="none" stroke-dasharray="1.6 1.6"><path d="M650 39 L650 43"/><path d="M644.8 49.6 L647.6 48"/><path d="M652.4 48 L655.2 49.6"/></g>
<circle cx="650" cy="46.25" r="7.6" fill="none" stroke="#c9c9c9" stroke-width="1"/><circle cx="650" cy="46.25" r="2.9" fill="#c9c9c9"/>
<circle cx="679.5" cy="37.5" r="6.5" fill="#3fb1c4"/><path d="M680.3 33.2 L680.3 37.8 L683.8 37.8" stroke="#fff" stroke-width="1" fill="none"/>
<g stroke="#3fb1c4" stroke-width="1"><path d="M686.2 41.5 L695 41.5 M679 46.5 L682 46.5 M685 46.5 L695 46.5 M679 51.3 L682 51.3 M685 51.3 L690 51.3"/></g>
<path d="M690 48.8 L697.6 56.2 M697.6 48.8 L690 56.2" stroke="#c9c9c9" stroke-width="1.9"/>
<path d="M720.4 41.9L720.4 30.1M720.4 33.3L718.1 31.1M720.4 33.3L722.7 31.1M720.4 37.5L718.0 35.1M720.4 37.5L722.8 35.1M720.4 41.9L710.2 36.0M713.0 37.6L709.9 38.5M713.0 37.6L712.2 34.5M716.6 39.7L713.3 40.6M716.6 39.7L715.8 36.4M720.4 41.9L710.2 47.8M713.0 46.2L712.2 49.3M713.0 46.2L709.9 45.3M716.6 44.1L715.8 47.4M716.6 44.1L713.3 43.2M720.4 41.9L720.4 53.7M720.4 50.5L722.7 52.7M720.4 50.5L718.1 52.7M720.4 46.3L722.8 48.7M720.4 46.3L718.0 48.7M720.4 41.9L730.6 47.8M727.8 46.2L730.9 45.3M727.8 46.2L728.6 49.3M724.2 44.1L727.5 43.2M724.2 44.1L725.0 47.4M720.4 41.9L730.6 36.0M727.8 37.6L728.6 34.5M727.8 37.6L730.9 38.5M724.2 39.7L725.0 36.4M724.2 39.7L727.5 40.6" stroke="#d8d8d8" stroke-width="1.1" fill="none"/>
<rect x="705" y="45" width="30.1" height="12.8" fill="#4b4b4b"/>
<text x="720.2" y="55.1" font-family="'Liberation Sans',sans-serif" font-weight="bold" font-size="11" text-anchor="middle" fill="#3fb6ca" stroke="#3fb6ca" stroke-width="0.3" letter-spacing="0.35">0,0,0</text>
<rect x="754" y="27" width="2" height="34.5" fill="#8a8a8a"/>
<circle cx="786.9" cy="41.25" r="9.75" fill="#e2964f"/><circle cx="792.75" cy="47.75" r="9" fill="#444444" stroke="#c9c9c9" stroke-width="1" stroke-dasharray="3 2"/>
<polygon points="797.25,57.75 803.50,57.75 803.50,51.75" fill="#c9c9c9" stroke="none" stroke-width="1" />
<circle cx="824" cy="44" r="11.7" fill="none" stroke="#c9c9c9" stroke-width="1"/>
<polygon points="825.00,42.95 835.00,47.70 825.00,52.45 815.00,47.70" fill="#e2964f" stroke="#444444" stroke-width="0.6" /><polygon points="822.50,35.90 831.00,40.30 822.50,44.70 814.00,40.30" fill="#e2964f" stroke="#444444" stroke-width="0.6" />
<rect x="851" y="33" width="8.75" height="8.75" fill="#c9c9c9"/><rect x="861.25" y="33" width="8.75" height="8.75" fill="#c9c9c9"/><rect x="861.25" y="43.4" width="8.75" height="8.4" fill="#c9c9c9"/><rect x="847.75" y="45.9" width="9.5" height="9.1" fill="#e2964f"/>
<polygon points="885.38,34.20 891.00,37.01 891.00,50.79 885.38,53.60 879.75,50.79 879.75,37.01" fill="#e2964f" stroke="none" stroke-width="1" /><polyline points="879.75,37.01 885.38,39.83 891.00,37.01" fill="none" stroke="#444444" stroke-width="0.9" /><polyline points="885.38,39.83 885.38,53.60" fill="none" stroke="#444444" stroke-width="0.9" /><polygon points="901.62,34.20 907.25,37.01 907.25,50.79 901.62,53.60 896.00,50.79 896.00,37.01" fill="#e2964f" stroke="none" stroke-width="1" /><polyline points="896.00,37.01 901.62,39.83 907.25,37.01" fill="none" stroke="#444444" stroke-width="0.9" /><polyline points="901.62,39.83 901.62,53.60" fill="none" stroke="#444444" stroke-width="0.9" />
<path d="M893.5 30.8 L893.5 57" stroke="#c9c9c9" stroke-width="1.2" stroke-dasharray="3 1.4"/>
<polygon points="933.60,49.00 929.60,55.93 921.60,55.93 917.60,49.00 921.60,42.07 929.60,42.07" fill="#c9c9c9" stroke="none" stroke-width="1" />
<path d="M916.2 42.6 A8.5 8.5 0 0 1 923.5 32.8" fill="none" stroke="#c9c9c9" stroke-width="1.8"/><polygon points="922.30,30.00 926.60,33.30 922.20,36.00" fill="#c9c9c9" stroke="none" stroke-width="1" />
<circle cx="932.25" cy="40.25" r="9.4" fill="#444444"/><circle cx="932.25" cy="40.25" r="8.7" fill="#e2964f"/>
<rect x="952.2" y="39.9" width="3" height="3" fill="#d4d4d4"/>
<rect x="952.2" y="43.9" width="3" height="3" fill="#d4d4d4"/>
<rect x="952.2" y="47.9" width="3" height="3" fill="#d4d4d4"/>
<rect x="952.2" y="51.9" width="3" height="3" fill="#d4d4d4"/>
<rect x="956.2" y="39.9" width="3" height="3" fill="#d4d4d4"/>
<rect x="956.2" y="43.9" width="3" height="3" fill="#d4d4d4"/>
<rect x="956.2" y="47.9" width="3" height="3" fill="#d4d4d4"/>
<rect x="956.2" y="51.9" width="3" height="3" fill="#d4d4d4"/>
<rect x="960.2" y="39.9" width="3" height="3" fill="#d4d4d4"/>
<rect x="960.2" y="43.9" width="3" height="3" fill="#d4d4d4"/>
<rect x="960.2" y="47.9" width="3" height="3" fill="#d4d4d4"/>
<rect x="960.2" y="51.9" width="3" height="3" fill="#d4d4d4"/>
<rect x="964.2" y="39.9" width="3" height="3" fill="#d4d4d4"/>
<rect x="964.2" y="43.9" width="3" height="3" fill="#d4d4d4"/>
<rect x="964.2" y="47.9" width="3" height="3" fill="#d4d4d4"/>
<rect x="964.2" y="51.9" width="3" height="3" fill="#d4d4d4"/>
<rect x="959.4" y="31.2" width="16.4" height="16.4" fill="#444444"/>
<rect x="960" y="31.75" width="7.25" height="7.25" fill="#e2964f"/>
<rect x="960" y="39.75" width="7.25" height="7.25" fill="#e2964f"/>
<rect x="968" y="31.75" width="7.25" height="7.25" fill="#e2964f"/>
<rect x="968" y="39.75" width="7.25" height="7.25" fill="#e2964f"/>
<rect x="986.8" y="39.7" width="15.3" height="15.3" fill="#e2964f"/><path d="M986.8 39.7 L1002.1 55" stroke="#444444" stroke-width="1"/>
<path d="M1001.9 32.55 A5.6 6.4 0 0 0 1002.1 45.25" fill="none" stroke="#444444" stroke-width="3.4"/><path d="M1005.3 32.55 A6 6.4 0 0 1 1007.9 43.75" fill="none" stroke="#444444" stroke-width="3.4"/><polygon points="997.60,30.35 1003.00,30.15 1003.00,35.25 1000.10,34.85" fill="#444444" stroke="none" stroke-width="1" /><polygon points="1004.00,46.35 1011.20,43.15 1006.50,40.45" fill="#444444" stroke="none" stroke-width="1" /><path d="M1001.9 32.55 A5.6 6.4 0 0 0 1002.1 45.25" fill="none" stroke="#c9c9c9" stroke-width="2.0"/><path d="M1005.3 32.55 A6 6.4 0 0 1 1007.9 43.75" fill="none" stroke="#c9c9c9" stroke-width="2.0"/><polygon points="998.30,31.05 1002.30,30.85 1002.30,34.55 1000.10,34.15" fill="#c9c9c9" stroke="none" stroke-width="1" /><polygon points="1004.70,45.65 1010.50,43.15 1006.50,41.15" fill="#c9c9c9" stroke="none" stroke-width="1" />
<rect x="1021.8" y="39.7" width="7.2" height="7.3" fill="#e2964f"/>
<rect x="1021.8" y="47.7" width="7.2" height="7.3" fill="#e2964f"/>
<rect x="1029.8999999999999" y="39.7" width="7.2" height="7.3" fill="#e2964f"/>
<rect x="1029.8999999999999" y="47.7" width="7.2" height="7.3" fill="#e2964f"/>
<path d="M1036.9 32.55 A5.6 6.4 0 0 0 1037.1 45.25" fill="none" stroke="#444444" stroke-width="3.4"/><path d="M1040.3 32.55 A6 6.4 0 0 1 1042.9 43.75" fill="none" stroke="#444444" stroke-width="3.4"/><polygon points="1032.60,30.35 1038.00,30.15 1038.00,35.25 1035.10,34.85" fill="#444444" stroke="none" stroke-width="1" /><polygon points="1039.00,46.35 1046.20,43.15 1041.50,40.45" fill="#444444" stroke="none" stroke-width="1" /><path d="M1036.9 32.55 A5.6 6.4 0 0 0 1037.1 45.25" fill="none" stroke="#c9c9c9" stroke-width="2.0"/><path d="M1040.3 32.55 A6 6.4 0 0 1 1042.9 43.75" fill="none" stroke="#c9c9c9" stroke-width="2.0"/><polygon points="1033.30,31.05 1037.30,30.85 1037.30,34.55 1035.10,34.15" fill="#c9c9c9" stroke="none" stroke-width="1" /><polygon points="1039.70,45.65 1045.50,43.15 1041.50,41.15" fill="#c9c9c9" stroke="none" stroke-width="1" />
<rect x="1068" y="27" width="2" height="34.5" fill="#8a8a8a"/>
<polygon points="1104.40,43.50 1109.10,46.60 1104.40,49.70 1099.70,46.60" fill="#c9c9c9" stroke="none" stroke-width="1" /><polygon points="1109.50,47.00 1114.20,50.10 1109.50,53.20 1104.80,50.10" fill="#c9c9c9" stroke="none" stroke-width="1" /><polygon points="1099.30,47.00 1104.00,50.10 1099.30,53.20 1094.60,50.10" fill="#c9c9c9" stroke="none" stroke-width="1" /><polygon points="1104.40,50.50 1109.10,53.60 1104.40,56.70 1099.70,53.60" fill="#c9c9c9" stroke="none" stroke-width="1" />
<polygon points="1097.50,30.90 1103.10,33.70 1103.10,50.10 1097.50,52.90 1091.90,50.10 1091.90,33.70" fill="#e2964f" stroke="none" stroke-width="1" /><polyline points="1091.90,33.70 1097.50,36.50 1103.10,33.70" fill="none" stroke="#444444" stroke-width="0.9" /><polyline points="1097.50,36.50 1097.50,52.90" fill="none" stroke="#444444" stroke-width="0.9" />
<polygon points="1137.20,43.50 1141.90,46.60 1137.20,49.70 1132.50,46.60" fill="#c9c9c9" stroke="none" stroke-width="1" /><polygon points="1142.30,47.00 1147.00,50.10 1142.30,53.20 1137.60,50.10" fill="#c9c9c9" stroke="none" stroke-width="1" /><polygon points="1132.10,47.00 1136.80,50.10 1132.10,53.20 1127.40,50.10" fill="#c9c9c9" stroke="none" stroke-width="1" /><polygon points="1137.20,50.50 1141.90,53.60 1137.20,56.70 1132.50,53.60" fill="#c9c9c9" stroke="none" stroke-width="1" />
<polygon points="1130.38,31.80 1136.00,34.61 1136.00,50.09 1130.38,52.90 1124.75,50.09 1124.75,34.61" fill="#e2964f" stroke="none" stroke-width="1" /><polyline points="1124.75,34.61 1130.38,37.42 1136.00,34.61" fill="none" stroke="#444444" stroke-width="0.9" /><polyline points="1130.38,37.42 1130.38,52.90" fill="none" stroke="#444444" stroke-width="0.9" />
<path d="M1146.9 29.6 Q1147.548 34.352 1152.3000000000002 35 Q1147.548 35.648 1146.9 40.4 Q1146.2520000000002 35.648 1141.5 35 Q1146.2520000000002 34.352 1146.9 29.6Z" fill="#e0e0e0"/><path d="M1141 36.85 Q1141.408 39.842 1144.4 40.25 Q1141.408 40.658 1141 43.65 Q1140.592 40.658 1137.6 40.25 Q1140.592 39.842 1141 36.85Z" fill="#e0e0e0"/><path d="M1146 42.6 Q1146.288 44.712 1148.4 45 Q1146.288 45.288 1146 47.4 Q1145.712 45.288 1143.6 45 Q1145.712 44.712 1146 42.6Z" fill="#e0e0e0"/>
<polygon points="1165.00,29.90 1171.90,33.40 1165.00,36.90 1158.10,33.40" fill="#c9c9c9" stroke="none" stroke-width="1" /><polygon points="1165.00,41.10 1171.90,44.60 1165.00,48.10 1158.10,44.60" fill="#c9c9c9" stroke="none" stroke-width="1" /><polygon points="1181.25,39.90 1188.15,43.40 1181.25,46.90 1174.35,43.40" fill="#c9c9c9" stroke="none" stroke-width="1" /><polygon points="1173.00,46.10 1179.90,49.60 1173.00,53.10 1166.10,49.60" fill="#e2964f" stroke="none" stroke-width="1" /><polygon points="1181.25,51.10 1188.15,54.60 1181.25,58.10 1174.35,54.60" fill="#c9c9c9" stroke="none" stroke-width="1" />
<polygon points="1173.00,35.60 1178.60,38.40 1173.00,41.20 1167.40,38.40" fill="none" stroke="#e2964f" stroke-width="1" stroke-dasharray="1.6 1.2"/>
<polygon points="1207.45,30.20 1219.50,37.00 1219.50,51.80 1207.45,57.60 1195.40,51.80 1195.40,37.00" fill="#3a3a3a" stroke="none" stroke-width="1" />
<polygon points="1207.45,30.90 1216.00,35.70 1207.45,40.90 1198.90,35.70" fill="#e2964f" stroke="none" stroke-width="1" />
<polygon points="1195.90,40.50 1205.10,45.00 1205.10,56.50 1195.90,51.60" fill="#e2964f" stroke="none" stroke-width="1" /><polygon points="1219.00,40.50 1209.80,45.00 1209.80,56.50 1219.00,51.60" fill="#e2964f" stroke="none" stroke-width="1" />
<polygon points="1198.30,36.60 1206.20,41.60 1204.90,44.00 1196.00,39.30" fill="#d2d2d2" stroke="none" stroke-width="1" /><polygon points="1216.60,36.60 1208.70,41.60 1210.00,44.00 1218.90,39.30" fill="#d2d2d2" stroke="none" stroke-width="1" />
<polygon points="1207.45,41.70 1209.60,44.60 1205.30,44.60" fill="#d2d2d2" stroke="none" stroke-width="1" />
<rect x="1206" y="45.8" width="2.9" height="11.2" fill="#d2d2d2"/>
<rect x="1230.8" y="40.8" width="15.6" height="15.2" fill="#c9c9c9"/><path d="M1238.6 40.8 L1238.6 56 M1230.8 48.4 L1246.4 48.4" stroke="#444444" stroke-width="1"/>
<polygon points="1239.75,31.40 1255.40,31.40 1255.40,47.00 1246.50,45.20 1243.20,41.50" fill="#e2964f" stroke="#444444" stroke-width="0.6" />
<path d="M1247.5 31.4 L1247.3 40 L1244 43.5 M1247.3 40 L1255.4 39.6" stroke="#444444" stroke-width="1" fill="none"/>
<rect x="1228.4" y="46.4" width="4" height="4" fill="#c9c9c9" stroke="#3a3a3a" stroke-width="0.9"/><rect x="1229.8000000000002" y="47.8" width="1.2" height="1.2" fill="#3a3a3a"/>
<rect x="1228.4" y="54.4" width="4" height="4" fill="#c9c9c9" stroke="#3a3a3a" stroke-width="0.9"/><rect x="1229.8000000000002" y="55.8" width="1.2" height="1.2" fill="#3a3a3a"/>
<rect x="1236.4" y="54.4" width="4" height="4" fill="#c9c9c9" stroke="#3a3a3a" stroke-width="0.9"/><rect x="1237.8000000000002" y="55.8" width="1.2" height="1.2" fill="#3a3a3a"/>
<rect x="1240.3" y="42.5" width="4" height="4" fill="#e2964f" stroke="#3a3a3a" stroke-width="0.9"/><rect x="1241.7" y="43.9" width="1.2" height="1.2" fill="#3a3a3a"/>
<g clip-path="url(#shelfclip)"><circle cx="1277" cy="44.7" r="11.6" fill="#e2964f"/><g stroke="#444444" stroke-width="0.9" fill="none"><circle cx="1277" cy="44.7" r="6.5"/><path d="M1265 44.7 L1278 44.7 M1269 36.5 L1278 45.5 M1269 53 L1278 44"/></g></g>
<rect x="3" y="75" width="1" height="1" fill="#7c7c7c"/>
<rect x="3" y="78" width="1" height="1" fill="#7c7c7c"/>
<rect x="6" y="75" width="1" height="1" fill="#7c7c7c"/>
<rect x="6" y="78" width="1" height="1" fill="#7c7c7c"/>
<rect x="9" y="75" width="1" height="1" fill="#7c7c7c"/>
<rect x="9" y="78" width="1" height="1" fill="#7c7c7c"/>
<rect x="12" y="75" width="1" height="1" fill="#7c7c7c"/>
<rect x="12" y="78" width="1" height="1" fill="#7c7c7c"/>
<rect x="15" y="75" width="1" height="1" fill="#7c7c7c"/>
<rect x="15" y="78" width="1" height="1" fill="#7c7c7c"/>
<rect x="18" y="75" width="1" height="1" fill="#7c7c7c"/>
<rect x="18" y="78" width="1" height="1" fill="#7c7c7c"/>
<rect x="21" y="75" width="1" height="1" fill="#7c7c7c"/>
<rect x="21" y="78" width="1" height="1" fill="#7c7c7c"/>
<rect x="24" y="75" width="1" height="1" fill="#7c7c7c"/>
<rect x="24" y="78" width="1" height="1" fill="#7c7c7c"/>
<rect x="27" y="75" width="1" height="1" fill="#7c7c7c"/>
<rect x="27" y="78" width="1" height="1" fill="#7c7c7c"/>
<rect x="30" y="75" width="1" height="1" fill="#7c7c7c"/>
<rect x="30" y="78" width="1" height="1" fill="#7c7c7c"/>
<rect x="33" y="75" width="1" height="1" fill="#7c7c7c"/>
<rect x="33" y="78" width="1" height="1" fill="#7c7c7c"/>
<rect x="36" y="75" width="1" height="1" fill="#7c7c7c"/>
<rect x="36" y="78" width="1" height="1" fill="#7c7c7c"/>
<rect x="39" y="75" width="1" height="1" fill="#7c7c7c"/>
<rect x="39" y="78" width="1" height="1" fill="#7c7c7c"/>
<rect x="4" y="84" width="36" height="36" fill="#5285a6"/>
<polygon points="16.50,88.40 16.50,111.52 21.94,106.35 26.29,116.14 30.51,114.24 26.29,104.99 33.64,104.99" fill="#c9c9c9" stroke="#3a3a3a" stroke-width="0.6" />
<ellipse cx="20" cy="135.8" rx="13.2" ry="5.8" transform="rotate(-42 20 135.6)" fill="none" stroke="#35b0c3" stroke-width="2" stroke-dasharray="4.2 2.4"/>
<polygon points="22.20,132.30 22.20,148.96 26.12,145.24 29.26,152.29 32.29,150.92 29.26,144.26 34.55,144.26" fill="#c9c9c9" stroke="#3a3a3a" stroke-width="0.6" />
<ellipse cx="19.2" cy="178.8" rx="13.6" ry="5.8" transform="rotate(43 19.2 178.8)" fill="none" stroke="#35b0c3" stroke-width="2" stroke-dasharray="4.2 2.4"/>
<path d="M34.6 163.6 L26.8 171.4" stroke="#c9c9c9" stroke-width="3.8" stroke-linecap="round"/>
<path d="M24.6 169.8 L28.4 173.6 Q25.5 180.4 15 179 Q20.5 176.5 21.8 172 Z" fill="#c9c9c9" stroke="#444444" stroke-width="0.5"/>
<polygon points="21.90,199.00 26.20,203.00 17.60,203.00" fill="#35b0c3" stroke="none" stroke-width="1" /><polygon points="21.90,227.20 26.20,223.20 17.60,223.20" fill="#35b0c3" stroke="none" stroke-width="1" /><polygon points="7.90,213.00 11.90,208.80 11.90,217.20" fill="#35b0c3" stroke="none" stroke-width="1" /><polygon points="36.20,213.00 32.20,208.80 32.20,217.20" fill="#35b0c3" stroke="none" stroke-width="1" />
<rect x="16" y="206.8" width="12.2" height="12.4" fill="#c9c9c9" stroke="#3a3a3a" stroke-width="0.5"/>
<path d="M34.37 251.66 A13.4 13.4 0 1 0 21.1 263.2" fill="none" stroke="#35b0c3" stroke-width="1.3"/>
<polygon points="32.20,249.60 37.20,249.60 34.70,253.80" fill="#35b0c3" stroke="none" stroke-width="1" />
<polygon points="21.00,242.00 29.00,250.00 21.00,258.00 13.00,250.00" fill="#c9c9c9" stroke="#3a3a3a" stroke-width="0.5" />
<rect x="10.4" y="274.8" width="24.6" height="23.6" fill="none" stroke="#35b0c3" stroke-width="1.1" stroke-dasharray="3 2"/>
<path d="M19.2 284.6 L25.2 284.6 L25.2 290.4" fill="none" stroke="#35b0c3" stroke-width="1.1"/>
<rect x="9.8" y="288" width="11.3" height="10.8" fill="#c9c9c9" stroke="#3a3a3a" stroke-width="0.5"/>
<rect x="4" y="384" width="36" height="2" fill="#8a8a8a"/><rect x="4" y="543" width="36" height="2" fill="#8a8a8a"/>
<rect x="8.3" y="395" width="27.6" height="27.6" fill="#3a3a3a" stroke="#b4b4b4" stroke-width="1"/><rect x="11" y="397.7" width="22.2" height="22.2" fill="#bdbdbd"/>
<polygon points="22.10,401.70 26.30,404.60 22.10,407.50 17.90,404.60" fill="#404040" stroke="none" stroke-width="1" />
<polygon points="16.70,405.90 20.90,408.80 16.70,411.70 12.50,408.80" fill="#404040" stroke="none" stroke-width="1" />
<polygon points="27.50,405.90 31.70,408.80 27.50,411.70 23.30,408.80" fill="#404040" stroke="none" stroke-width="1" />
<polygon points="22.10,410.10 26.30,413.00 22.10,415.90 17.90,413.00" fill="#404040" stroke="none" stroke-width="1" />
<rect x="8.3" y="432.3" width="12.2" height="12.2" fill="#3a3a3a" stroke="#b8b8b8" stroke-width="1"/><path d="M11.2 438.40000000000003 L17.599999999999998 438.40000000000003 M14.399999999999999 435.20000000000005 L14.399999999999999 441.6" stroke="#e0e0e0" stroke-width="1"/><rect x="23.3" y="432.3" width="12.6" height="12.2" fill="#c4c4c4" stroke="#b8b8b8" stroke-width="1"/><polygon points="29.60,436.00 33.50,438.40 29.60,440.80 25.70,438.40" fill="#3a3a3a" stroke="none" stroke-width="1" /><rect x="8.3" y="447.3" width="12.2" height="12.2" fill="#3a3a3a" stroke="#b8b8b8" stroke-width="1"/><path d="M11.2 453.40000000000003 L17.599999999999998 453.40000000000003 M14.399999999999999 450.20000000000005 L14.399999999999999 456.6" stroke="#e0e0e0" stroke-width="1"/><rect x="23.3" y="447.3" width="12.6" height="12.2" fill="#3a3a3a" stroke="#b8b8b8" stroke-width="1"/><path d="M26.400000000000002 453.40000000000003 L32.800000000000004 453.40000000000003 M29.6 450.20000000000005 L29.6 456.6" stroke="#e0e0e0" stroke-width="1"/>
<rect x="8.3" y="468.7" width="12.2" height="28" fill="#3a3a3a" stroke="#b8b8b8" stroke-width="1"/><path d="M11.2 482.7 L17.599999999999998 482.7 M14.399999999999999 479.5 L14.399999999999999 485.9" stroke="#e0e0e0" stroke-width="1"/><rect x="23.3" y="468.7" width="12.6" height="28" fill="#c4c4c4" stroke="#b8b8b8" stroke-width="1"/><polygon points="29.60,480.30 33.50,482.70 29.60,485.10 25.70,482.70" fill="#3a3a3a" stroke="none" stroke-width="1" />
<rect x="4" y="502" width="36" height="36" fill="#5285a6"/>
<rect x="8.1" y="506" width="28" height="28.5" fill="none" stroke="#d8d8d8" stroke-width="1"/><rect x="10.2" y="508.2" width="23.8" height="24.2" fill="none" stroke="#3a3a3a" stroke-width="0.9"/>
<path d="M14 514 L14 529 M14 517.5 L19 517.5 M14 523.5 L19 523.5 M14 529 L19 529" stroke="#d8d8d8" stroke-width="1" fill="none"/>
<path d="M16 512 L27.5 512 M22 517.5 L31 517.5 M22 523.5 L28.5 523.5 M22 529 L30.5 529" stroke="#e2e2e2" stroke-width="1.5" fill="none"/>
<rect x="12.2" y="510.2" width="3.6" height="3.6" fill="#e4e4e4" stroke="#3a3a3a" stroke-width="0.6"/>
<rect x="18.2" y="515.7" width="3.6" height="3.6" fill="#e4e4e4" stroke="#3a3a3a" stroke-width="0.6"/>
<rect x="18.2" y="521.7" width="3.6" height="3.6" fill="#e4e4e4" stroke="#3a3a3a" stroke-width="0.6"/>
<rect x="18.2" y="527.2" width="3.6" height="3.6" fill="#e4e4e4" stroke="#3a3a3a" stroke-width="0.6"/>
<circle cx="19" cy="565.5" r="6.6" fill="none" stroke="#c9c9c9" stroke-width="2"/><path d="M24 570.4 L32.2 577.8" stroke="#c9c9c9" stroke-width="2.6" stroke-linecap="round"/>
<polygon points="7.00,733.60 12.50,730.00 12.50,752.30 7.00,754.40" fill="#72c3e0" stroke="none" stroke-width="1" />
<path d="M12.5 730 L33 730 Q34.8 730 34.8 731.8 L34.8 752.3 L12.5 752.3 Z" fill="#37a5cc"/>
<polygon points="34.80,734.70 36.40,734.70 36.40,752.30 34.80,752.30" fill="#2f7896" stroke="none" stroke-width="1" />
<path d="M9.9 753.3 L12.5 752.3 L36.4 752.3 L36.4 760 Q36.4 761.8 34.6 761.8 L11.7 761.8 Q9.9 761.8 9.9 760 Z" fill="#36657f"/>
<text x="23.4" y="747.1" font-family="'Liberation Sans',sans-serif" font-weight="bold" font-size="16.5" text-anchor="middle" fill="#fff">M</text>
<text x="23.2" y="759.2" font-family="'Liberation Sans',sans-serif" font-weight="bold" font-size="6" text-anchor="middle" fill="#fff">AYA</text>
<g stroke="#686868" stroke-width="1" fill="none" stroke-dasharray="3 1.5"><rect x="57.5" y="120.5" width="9.5" height="13"/></g>
<polygon points="55.00,118.80 59.40,121.50 55.00,124.20" fill="#6a6a6a" stroke="none" stroke-width="1" />
<polygon points="55.00,129.80 59.40,132.50 55.00,135.20" fill="#6a6a6a" stroke="none" stroke-width="1" />
<polygon points="69.50,118.80 65.10,121.50 69.50,124.20" fill="#6a6a6a" stroke="none" stroke-width="1" />
<polygon points="69.50,129.80 65.10,132.50 69.50,135.20" fill="#6a6a6a" stroke="none" stroke-width="1" />
<polygon points="291.00,124.60 301.00,124.60 296.00,130.00" fill="#c9c9c9" stroke="none" stroke-width="1" />
<polygon points="296.00,147.00 305.00,147.00 300.50,142.00" fill="#c9c9c9" stroke="none" stroke-width="1" /><polygon points="296.00,737.00 305.00,737.00 300.50,742.00" fill="#c9c9c9" stroke="none" stroke-width="1" />
<polygon points="58.00,748.30 58.00,756.70 53.00,752.50" fill="#c9c9c9" stroke="none" stroke-width="1" /><polygon points="285.00,748.30 285.00,756.70 290.00,752.50" fill="#c9c9c9" stroke="none" stroke-width="1" />
<rect x="135" y="760" width="1" height="1" fill="#7c7c7c"/>
<rect x="138" y="760" width="1" height="1" fill="#7c7c7c"/>
<rect x="141" y="760" width="1" height="1" fill="#7c7c7c"/>
<rect x="144" y="760" width="1" height="1" fill="#7c7c7c"/>
<rect x="147" y="760" width="1" height="1" fill="#7c7c7c"/>
<rect x="150" y="760" width="1" height="1" fill="#7c7c7c"/>
<rect x="153" y="760" width="1" height="1" fill="#7c7c7c"/>
<rect x="156" y="760" width="1" height="1" fill="#7c7c7c"/>
<rect x="159" y="760" width="1" height="1" fill="#7c7c7c"/>
<rect x="162" y="760" width="1" height="1" fill="#7c7c7c"/>
<rect x="165" y="760" width="1" height="1" fill="#7c7c7c"/>
<rect x="168" y="760" width="1" height="1" fill="#7c7c7c"/>
<rect x="171" y="760" width="1" height="1" fill="#7c7c7c"/>
<rect x="174" y="760" width="1" height="1" fill="#7c7c7c"/>
<rect x="177" y="760" width="1" height="1" fill="#7c7c7c"/>
<rect x="180" y="760" width="1" height="1" fill="#7c7c7c"/>
<rect x="183" y="760" width="1" height="1" fill="#7c7c7c"/>
<rect x="186" y="760" width="1" height="1" fill="#7c7c7c"/>
<rect x="189" y="760" width="1" height="1" fill="#7c7c7c"/>
<rect x="192" y="760" width="1" height="1" fill="#7c7c7c"/>
<rect x="195" y="760" width="1" height="1" fill="#7c7c7c"/>
<rect x="198" y="760" width="1" height="1" fill="#7c7c7c"/>
<rect x="201" y="760" width="1" height="1" fill="#7c7c7c"/>
<rect x="204" y="760" width="1" height="1" fill="#7c7c7c"/>
<rect x="207" y="760" width="1" height="1" fill="#7c7c7c"/>
<rect x="210" y="760" width="1" height="1" fill="#7c7c7c"/>
<rect x="213" y="760" width="1" height="1" fill="#7c7c7c"/>
<rect x="216" y="760" width="1" height="1" fill="#7c7c7c"/>
<rect x="219" y="760" width="1" height="1" fill="#7c7c7c"/>
<rect x="86" y="145.3" width="9.2" height="6.5" fill="#c9c9c9"/><polygon points="96.00,148.40 100.30,144.00 100.30,153.00" fill="#c9c9c9" stroke="none" stroke-width="1" />
<rect x="86" y="165.3" width="9.2" height="6.5" fill="#c9c9c9"/><polygon points="96.00,168.40 100.30,164.00 100.30,173.00" fill="#c9c9c9" stroke="none" stroke-width="1" />
<rect x="86" y="185.3" width="9.2" height="6.5" fill="#c9c9c9"/><polygon points="96.00,188.40 100.30,184.00 100.30,193.00" fill="#c9c9c9" stroke="none" stroke-width="1" />
<rect x="86" y="205.3" width="9.2" height="6.5" fill="#c9c9c9"/><polygon points="96.00,208.40 100.30,204.00 100.30,213.00" fill="#c9c9c9" stroke="none" stroke-width="1" />
<polygon points="92.90,221.75 102.10,228.75 92.90,235.75 83.70,228.75" fill="#3a3a3a" stroke="none" stroke-width="1" />
<polygon points="92.90,222.35 96.90,225.35 92.90,228.35 88.90,225.35" fill="#d0d0d0" stroke="none" stroke-width="1" />
<polygon points="88.50,225.75 92.50,228.75 88.50,231.75 84.50,228.75" fill="#d0d0d0" stroke="none" stroke-width="1" />
<polygon points="97.30,225.75 101.30,228.75 97.30,231.75 93.30,228.75" fill="#d0d0d0" stroke="none" stroke-width="1" />
<polygon points="92.90,229.15 96.90,232.15 92.90,235.15 88.90,232.15" fill="#d0d0d0" stroke="none" stroke-width="1" />
<path d="M92 241.2 Q100.5 244.5 95.8 248.6 Q84.5 253.5 93.5 257" fill="none" stroke="#4ba0d2" stroke-width="1.8"/>
<circle cx="92.9" cy="269" r="7.5" fill="none" stroke="#d0d0d0" stroke-width="1"/>
<rect x="91.9" y="265" width="5.4" height="7.8" fill="#35b0c3"/><circle cx="91" cy="271.2" r="3.1" fill="#d0d0d0" stroke="#373737" stroke-width="0.6"/>
<circle cx="92.9" cy="289" r="7.5" fill="none" stroke="#d0d0d0" stroke-width="1"/>
<rect x="91.9" y="285" width="5.4" height="7.8" fill="#35b0c3"/><circle cx="91" cy="291.2" r="3.1" fill="#d0d0d0" stroke="#373737" stroke-width="0.6"/>
<rect x="320.0" y="98" width="1" height="16" fill="#7a7a7a"/><rect x="319.0" y="101.6" width="3" height="8.6" fill="#7a7a7a"/>
<rect x="425.0" y="98" width="1" height="16" fill="#7a7a7a"/><rect x="424.0" y="101.6" width="3" height="8.6" fill="#7a7a7a"/>
<rect x="569.0" y="98" width="1" height="16" fill="#7a7a7a"/><rect x="568.0" y="101.6" width="3" height="8.6" fill="#7a7a7a"/>
<rect x="713.0" y="98" width="1" height="16" fill="#7a7a7a"/><rect x="712.0" y="101.6" width="3" height="8.6" fill="#7a7a7a"/>
<rect x="857.0" y="98" width="1" height="16" fill="#7a7a7a"/><rect x="856.0" y="101.6" width="3" height="8.6" fill="#7a7a7a"/>
<rect x="944.0" y="98" width="1" height="16" fill="#7a7a7a"/><rect x="943.0" y="101.6" width="3" height="8.6" fill="#7a7a7a"/>
<rect x="974.0" y="98" width="1" height="16" fill="#7a7a7a"/><rect x="973.0" y="101.6" width="3" height="8.6" fill="#7a7a7a"/>
<rect x="1042.0" y="98" width="1" height="16" fill="#7a7a7a"/><rect x="1041.0" y="101.6" width="3" height="8.6" fill="#7a7a7a"/>
<polygon points="327.00,101.00 329.20,98.00 329.20,110.80 327.00,113.00" fill="#7fcbe6" stroke="none" stroke-width="1" />
<path d="M329.2 98 L341 98 Q342.4 98 342.4 99.4 L342.4 110.8 L329.2 110.8 Z" fill="#3ba4cd"/>
<polygon points="327.00,113.00 329.20,110.80 342.40,110.80 343.20,112.00 343.20,113.80 327.60,113.80" fill="#2e7595" stroke="none" stroke-width="1" />
<text x="336" y="108.2" font-family="'Liberation Sans',sans-serif" font-weight="bold" font-size="9.6" text-anchor="middle" fill="#fff">A</text>
<rect x="348.6" y="100.6" width="10.6" height="10.8" fill="none" stroke="#8c8c8c" stroke-width="1.2"/><rect x="350.2" y="102.2" width="7.5" height="7.6" fill="#35b0c3"/>
<circle cx="348.6" cy="100.6" r="1.5" fill="#9a9a9a"/>
<circle cx="359.2" cy="100.6" r="1.5" fill="#9a9a9a"/>
<circle cx="348.6" cy="111.4" r="1.5" fill="#9a9a9a"/>
<circle cx="359.2" cy="111.4" r="1.5" fill="#9a9a9a"/>
<rect x="366" y="99" width="14" height="12.8" fill="#4b535e"/><path d="M367 104 L375 104 L375 111" fill="none" stroke="#414852" stroke-width="1" stroke-dasharray="1 1"/>
<circle cx="392" cy="105.7" r="6.5" fill="#585858"/><path d="M392 105.7 L386.2 102.8 A6.5 6.5 0 0 1 392 99.2 Z" fill="#5a5068"/><path d="M392 105.7 L392 99.2 A6.5 6.5 0 0 1 397.5 102.2 Z" fill="#4f6353"/><path d="M392 105.7 L386.2 102.8 A6.5 6.5 0 0 0 387.4 110.3 Z" fill="#65504f"/>
<rect x="407" y="98.3" width="11.6" height="9" fill="#4a5a50"/><rect x="405.5" y="100" width="11.6" height="9" fill="#5a4d50"/><rect x="404.2" y="101.8" width="11.8" height="9" fill="#4a4f66"/><rect x="403" y="103.6" width="12" height="9.2" fill="#4d5a60"/><path d="M404 112 L407 108.5 L409 110.5 L411.5 107 L414.5 112 Z" fill="#5e6a6e"/>
<rect x="434" y="103" width="9" height="6" fill="#c9c9c9"/><polygon points="443.80,106.00 448.20,101.80 448.20,110.20" fill="#c9c9c9" stroke="none" stroke-width="1" />
<rect x="453" y="100.4" width="8.8" height="5.6" fill="#c9c9c9"/><polygon points="462.80,103.60 467.00,99.80 467.00,107.60" fill="#c9c9c9" stroke="none" stroke-width="1" />
<rect x="452.2" y="105.4" width="8" height="7" fill="#444444"/><rect x="453" y="106.6" width="6.4" height="5.2" fill="#35b0c3"/><path d="M454.4 106.6 L454.4 105.2 A1.8 1.8 0 0 1 458 105.2 L458 106.6" fill="none" stroke="#35b0c3" stroke-width="1.2"/><rect x="455.7" y="108.3" width="1" height="1.8" fill="#444444"/>
<rect x="472" y="100.4" width="8.6" height="5.6" fill="#c9c9c9"/><polygon points="481.60,103.60 486.00,99.80 486.00,107.60" fill="#c9c9c9" stroke="none" stroke-width="1" />
<circle cx="476.2" cy="107.8" r="5.4" fill="#444444"/><line x1="479.20" y1="107.80" x2="480.90" y2="107.80" stroke="#35b0c3" stroke-width="1.7"/><line x1="478.32" y1="109.92" x2="479.52" y2="111.12" stroke="#35b0c3" stroke-width="1.7"/><line x1="476.20" y1="110.80" x2="476.20" y2="112.50" stroke="#35b0c3" stroke-width="1.7"/><line x1="474.08" y1="109.92" x2="472.88" y2="111.12" stroke="#35b0c3" stroke-width="1.7"/><line x1="473.20" y1="107.80" x2="471.50" y2="107.80" stroke="#35b0c3" stroke-width="1.7"/><line x1="474.08" y1="105.68" x2="472.88" y2="104.48" stroke="#35b0c3" stroke-width="1.7"/><line x1="476.20" y1="104.80" x2="476.20" y2="103.10" stroke="#35b0c3" stroke-width="1.7"/><line x1="478.32" y1="105.68" x2="479.52" y2="104.48" stroke="#35b0c3" stroke-width="1.7"/><circle cx="476.2" cy="107.8" r="2.8" fill="none" stroke="#35b0c3" stroke-width="1.4"/>
<polygon points="494.60,100.00 501.00,100.00 501.00,111.30 497.80,108.60 494.60,111.30" fill="#c9c9c9" stroke="none" stroke-width="1" />
<polygon points="510.00,113.00 513.40,108.60 523.90,108.60 520.60,113.00" fill="#c9c9c9" stroke="none" stroke-width="1" /><path d="M512 110.8 L522.4 110.8 M516.6 108.6 L514.8 113" stroke="#444444" stroke-width="0.8"/>
<polygon points="515.30,103.80 519.80,100.20 519.80,109.60 515.30,111.40" fill="#35b0c3" stroke="#444444" stroke-width="0.5" />
<path d="M535.6 100.5 L535.6 105.6 L530.4 105.6" fill="none" stroke="#c9c9c9" stroke-width="1.3"/><polygon points="535.60,98.90 538.00,101.80 533.20,101.80" fill="#c9c9c9" stroke="none" stroke-width="1" /><polygon points="528.90,105.60 531.80,103.20 531.80,108.00" fill="#c9c9c9" stroke="none" stroke-width="1" />
<circle cx="539.8" cy="107.2" r="3.2" fill="none" stroke="#35b0c3" stroke-width="1.4"/><path d="M537.4 109.8 L534.6 112.6" stroke="#35b0c3" stroke-width="1.8" stroke-linecap="round"/>
<path d="M559.6 101.4 L552 108.4" stroke="#35b0c3" stroke-width="3.6" stroke-linecap="round"/><path d="M551.2 109.2 L549.4 111" stroke="#c9c9c9" stroke-width="2.6" stroke-linecap="round"/>
<rect x="576" y="97" width="18" height="18" fill="#5285a6"/>
<rect x="739" y="97" width="18" height="18" fill="#5285a6"/>
<rect x="777" y="97" width="18" height="18" fill="#5285a6"/>
<rect x="579.6" y="100.3" width="11.2" height="11" fill="#e2e2e2" stroke="#3a3a3a" stroke-width="0.7"/>
<rect x="581.4" y="102.0" width="1.8" height="1.7" fill="#2e2e2e"/>
<rect x="581.4" y="104.9" width="1.8" height="1.7" fill="#2e2e2e"/>
<rect x="581.4" y="107.8" width="1.8" height="1.7" fill="#2e2e2e"/>
<rect x="584.35" y="102.0" width="1.8" height="1.7" fill="#2e2e2e"/>
<rect x="584.35" y="104.9" width="1.8" height="1.7" fill="#2e2e2e"/>
<rect x="584.35" y="107.8" width="1.8" height="1.7" fill="#2e2e2e"/>
<rect x="587.3" y="102.0" width="1.8" height="1.7" fill="#2e2e2e"/>
<rect x="587.3" y="104.9" width="1.8" height="1.7" fill="#2e2e2e"/>
<rect x="587.3" y="107.8" width="1.8" height="1.7" fill="#2e2e2e"/>
<rect x="597.6" y="100.6" width="13" height="11" fill="#3a3a3a" stroke="#cdcdcd" stroke-width="1.1"/><path d="M599.5 102.2 L609.5 102.2 M599.5 110 L609.5 110" stroke="#d4d4d4" stroke-width="1" stroke-dasharray="2 1"/><rect x="598.5" y="103.4" width="11" height="5.4" fill="#3a3a3a"/>
<rect x="616.6" y="100.6" width="13" height="11" fill="#3a3a3a" stroke="#cdcdcd" stroke-width="1.1"/><circle cx="623" cy="106.1" r="3" fill="#35b0c3"/>
<rect x="633.3" y="97.3" width="17.6" height="17.2" fill="#3a3a3a" stroke="#333" stroke-width="0.6"/><rect x="635" y="100" width="14" height="11.7" fill="#4e4e4e"/><circle cx="641.8" cy="105.8" r="3.9" fill="#3e3e3e"/>
<rect x="654.6" y="100.6" width="13" height="11" fill="#3a3a3a" stroke="#cdcdcd" stroke-width="1.1"/><path d="M655.4 106.1 L667 106.1" stroke="#35b0c3" stroke-width="2" stroke-dasharray="1.4 0.8"/><path d="M661.2 101.4 L661.2 110.8" stroke="#35b0c3" stroke-width="2" stroke-dasharray="1.2 1.4"/>
<rect x="673.6" y="100.6" width="13" height="11" fill="#3a3a3a" stroke="#cdcdcd" stroke-width="1.1"/><circle cx="682.6" cy="104.4" r="2.3" fill="#35b0c3"/><polygon points="675.40,110.00 681.00,110.00 678.20,105.40" fill="#35b0c3" stroke="none" stroke-width="1" />
<rect x="692.6" y="100.6" width="13" height="11" fill="#3a3a3a" stroke="#cdcdcd" stroke-width="1.1"/><text x="699.2" y="110" font-family="'Liberation Serif',serif" font-weight="bold" font-size="11" text-anchor="middle" fill="#35b0c3">T</text>
<polygon points="729.40,98.69 735.82,102.34 735.82,109.66 729.40,113.31 722.98,109.66 722.98,102.34" fill="none" stroke="#d4d4d4" stroke-width="1.1" /><polyline points="722.98,102.34 729.40,106.00 735.82,102.34" fill="none" stroke="#d4d4d4" stroke-width="1.1" /><polyline points="729.40,106.00 729.40,113.31" fill="none" stroke="#d4d4d4" stroke-width="1.1" /><polyline points="722.98,109.66 729.40,105.31 735.82,109.66" fill="none" stroke="#7a7a7a" stroke-width="0.7" /><polyline points="729.40,105.31 729.40,98.69" fill="none" stroke="#7a7a7a" stroke-width="0.7" />
<polygon points="748.20,98.37 754.90,102.18 748.20,106.00 741.50,102.18" fill="#84dbe8" stroke="none" stroke-width="1" /><polygon points="741.50,102.18 748.20,106.00 748.20,113.63 741.50,109.82" fill="#3cb6c8" stroke="none" stroke-width="1" /><polygon points="748.20,106.00 754.90,102.18 754.90,109.82 748.20,113.63" fill="#52c6d6" stroke="none" stroke-width="1" /><polygon points="748.20,98.37 754.90,102.18 754.90,109.82 748.20,113.63 741.50,109.82 741.50,102.18" fill="none" stroke="#3a3a3a" stroke-width="0.7" /><polyline points="741.50,102.18 748.20,106.00 754.90,102.18" fill="none" stroke="#3a3a3a" stroke-width="0.6" /><polyline points="748.20,106.00 748.20,113.63" fill="none" stroke="#3a3a3a" stroke-width="0.6" />
<polygon points="786.20,101.27 790.35,103.63 786.20,106.00 782.05,103.63" fill="#84dbe8" stroke="none" stroke-width="1" /><polygon points="782.05,103.63 786.20,106.00 786.20,110.73 782.05,108.37" fill="#3cb6c8" stroke="none" stroke-width="1" /><polygon points="786.20,106.00 790.35,103.63 790.35,108.37 786.20,110.73" fill="#52c6d6" stroke="none" stroke-width="1" /><polygon points="786.20,98.37 792.90,102.18 792.90,109.82 786.20,113.63 779.50,109.82 779.50,102.18" fill="none" stroke="#3a3a3a" stroke-width="2.2" /><polygon points="786.20,98.37 792.90,102.18 792.90,109.82 786.20,113.63 779.50,109.82 779.50,102.18" fill="none" stroke="#d4d4d4" stroke-width="1.2" /><polyline points="779.50,102.18 786.20,106.00 792.90,102.18" fill="none" stroke="#3a3a3a" stroke-width="2" /><polyline points="786.20,106.00 786.20,113.63" fill="none" stroke="#3a3a3a" stroke-width="2" /><polyline points="779.50,102.18 786.20,106.00 792.90,102.18" fill="none" stroke="#d4d4d4" stroke-width="1.1" /><polyline points="786.20,106.00 786.20,113.63" fill="none" stroke="#d4d4d4" stroke-width="1.1" />
<clipPath id="ck1"><circle cx="767.4" cy="105.8" r="6.4"/></clipPath><g clip-path="url(#ck1)"><rect x="761.0" y="99.39999999999999" width="12.8" height="12.8" fill="#2e2e2e"/><rect x="761.00" y="99.40" width="2.0" height="2.0" fill="#e0e0e0"/><rect x="761.00" y="103.40" width="2.0" height="2.0" fill="#e0e0e0"/><rect x="761.00" y="107.40" width="2.0" height="2.0" fill="#e0e0e0"/><rect x="761.00" y="111.40" width="2.0" height="2.0" fill="#e0e0e0"/><rect x="763.00" y="101.40" width="2.0" height="2.0" fill="#e0e0e0"/><rect x="763.00" y="105.40" width="2.0" height="2.0" fill="#e0e0e0"/><rect x="763.00" y="109.40" width="2.0" height="2.0" fill="#e0e0e0"/><rect x="763.00" y="113.40" width="2.0" height="2.0" fill="#e0e0e0"/><rect x="765.00" y="99.40" width="2.0" height="2.0" fill="#e0e0e0"/><rect x="765.00" y="103.40" width="2.0" height="2.0" fill="#e0e0e0"/><rect x="765.00" y="107.40" width="2.0" height="2.0" fill="#e0e0e0"/><rect x="765.00" y="111.40" width="2.0" height="2.0" fill="#e0e0e0"/><rect x="767.00" y="101.40" width="2.0" height="2.0" fill="#e0e0e0"/><rect x="767.00" y="105.40" width="2.0" height="2.0" fill="#e0e0e0"/><rect x="767.00" y="109.40" width="2.0" height="2.0" fill="#e0e0e0"/><rect x="767.00" y="113.40" width="2.0" height="2.0" fill="#e0e0e0"/><rect x="769.00" y="99.40" width="2.0" height="2.0" fill="#e0e0e0"/><rect x="769.00" y="103.40" width="2.0" height="2.0" fill="#e0e0e0"/><rect x="769.00" y="107.40" width="2.0" height="2.0" fill="#e0e0e0"/><rect x="769.00" y="111.40" width="2.0" height="2.0" fill="#e0e0e0"/><rect x="771.00" y="101.40" width="2.0" height="2.0" fill="#e0e0e0"/><rect x="771.00" y="105.40" width="2.0" height="2.0" fill="#e0e0e0"/><rect x="771.00" y="109.40" width="2.0" height="2.0" fill="#e0e0e0"/><rect x="771.00" y="113.40" width="2.0" height="2.0" fill="#e0e0e0"/><rect x="773.00" y="99.40" width="2.0" height="2.0" fill="#e0e0e0"/><rect x="773.00" y="103.40" width="2.0" height="2.0" fill="#e0e0e0"/><rect x="773.00" y="107.40" width="2.0" height="2.0" fill="#e0e0e0"/><rect x="773.00" y="111.40" width="2.0" height="2.0" fill="#e0e0e0"/><rect x="775.00" y="101.40" width="2.0" height="2.0" fill="#e0e0e0"/><rect x="775.00" y="105.40" width="2.0" height="2.0" fill="#e0e0e0"/><rect x="775.00" y="109.40" width="2.0" height="2.0" fill="#e0e0e0"/><rect x="775.00" y="113.40" width="2.0" height="2.0" fill="#e0e0e0"/><rect x="761.0" y="99.39999999999999" width="6.800000000000001" height="12.8" fill="#cfcfcf"/></g>
<clipPath id="ck2"><circle cx="805.2" cy="105.8" r="6.4"/></clipPath><g clip-path="url(#ck2)"><rect x="798.8000000000001" y="99.39999999999999" width="12.8" height="12.8" fill="#2e2e2e"/><rect x="798.80" y="99.40" width="2.0" height="2.0" fill="#e0e0e0"/><rect x="798.80" y="103.40" width="2.0" height="2.0" fill="#e0e0e0"/><rect x="798.80" y="107.40" width="2.0" height="2.0" fill="#e0e0e0"/><rect x="798.80" y="111.40" width="2.0" height="2.0" fill="#e0e0e0"/><rect x="800.80" y="101.40" width="2.0" height="2.0" fill="#e0e0e0"/><rect x="800.80" y="105.40" width="2.0" height="2.0" fill="#e0e0e0"/><rect x="800.80" y="109.40" width="2.0" height="2.0" fill="#e0e0e0"/><rect x="800.80" y="113.40" width="2.0" height="2.0" fill="#e0e0e0"/><rect x="802.80" y="99.40" width="2.0" height="2.0" fill="#e0e0e0"/><rect x="802.80" y="103.40" width="2.0" height="2.0" fill="#e0e0e0"/><rect x="802.80" y="107.40" width="2.0" height="2.0" fill="#e0e0e0"/><rect x="802.80" y="111.40" width="2.0" height="2.0" fill="#e0e0e0"/><rect x="804.80" y="101.40" width="2.0" height="2.0" fill="#e0e0e0"/><rect x="804.80" y="105.40" width="2.0" height="2.0" fill="#e0e0e0"/><rect x="804.80" y="109.40" width="2.0" height="2.0" fill="#e0e0e0"/><rect x="804.80" y="113.40" width="2.0" height="2.0" fill="#e0e0e0"/><rect x="806.80" y="99.40" width="2.0" height="2.0" fill="#e0e0e0"/><rect x="806.80" y="103.40" width="2.0" height="2.0" fill="#e0e0e0"/><rect x="806.80" y="107.40" width="2.0" height="2.0" fill="#e0e0e0"/><rect x="806.80" y="111.40" width="2.0" height="2.0" fill="#e0e0e0"/><rect x="808.80" y="101.40" width="2.0" height="2.0" fill="#e0e0e0"/><rect x="808.80" y="105.40" width="2.0" height="2.0" fill="#e0e0e0"/><rect x="808.80" y="109.40" width="2.0" height="2.0" fill="#e0e0e0"/><rect x="808.80" y="113.40" width="2.0" height="2.0" fill="#e0e0e0"/><rect x="810.80" y="99.40" width="2.0" height="2.0" fill="#e0e0e0"/><rect x="810.80" y="103.40" width="2.0" height="2.0" fill="#e0e0e0"/><rect x="810.80" y="107.40" width="2.0" height="2.0" fill="#e0e0e0"/><rect x="810.80" y="111.40" width="2.0" height="2.0" fill="#e0e0e0"/><rect x="812.80" y="101.40" width="2.0" height="2.0" fill="#e0e0e0"/><rect x="812.80" y="105.40" width="2.0" height="2.0" fill="#e0e0e0"/><rect x="812.80" y="109.40" width="2.0" height="2.0" fill="#e0e0e0"/><rect x="812.80" y="113.40" width="2.0" height="2.0" fill="#e0e0e0"/></g>
<path d="M820.2 104.2 A3.8 3.8 0 1 1 827.8 104.2 Q827.6 106.4 826 108 L826 110 L822 110 L822 108 Q820.4 106.4 820.2 104.2Z" fill="#e6e6e6"/><rect x="822.4" y="111" width="3.2" height="1.6" fill="#e6e6e6"/>
<g stroke="#e6e6e6" stroke-width="1"><path d="M824 98.6 L824 100 M817 104.6 L818.6 104.6 M829.4 104.6 L831 104.6 M819 100.2 L820 101.2 M829 100.2 L828 101.2"/></g>
<circle cx="845.4" cy="105.1" r="4.7" fill="#3f5a60"/><path d="M837 108 L840.5 111 M839.5 106.4 L843 109.8" stroke="#505050" stroke-width="1.2"/>
<circle cx="872.6" cy="103.2" r="4.7" fill="#c9c9c9"/><polygon points="866.00,109.60 870.50,107.40 879.60,109.60 874.40,112.80" fill="none" stroke="#35b0c3" stroke-width="1" />
<path d="M868.8 108.6 L873 111.6 M871.4 108 L876 110.8 M874 108.2 L878 110.2" stroke="#35b0c3" stroke-width="0.8"/><path d="M870.6 105.8 L870.6 108 M872.6 106.6 L872.6 108.8 M874.6 105.8 L874.6 108" stroke="#444444" stroke-width="0.9"/>
<circle cx="889" cy="108.6" r="4.2" fill="#5e5e5e"/><circle cx="892" cy="105.6" r="4.2" fill="#777"/><circle cx="895" cy="102.8" r="4.3" fill="#c9c9c9"/>
<path d="M911 100.3 A5.5 5.5 0 0 0 911 111.3" fill="none" stroke="#35b0c3" stroke-width="2"/>
<rect x="911.8" y="99.4" width="1.8" height="1.8" fill="#e8e8e8"/>
<rect x="914.0" y="101" width="1.8" height="1.8" fill="#e8e8e8"/>
<rect x="915.5999999999999" y="103" width="1.8" height="1.8" fill="#e8e8e8"/>
<rect x="916.0999999999999" y="105" width="1.8" height="1.8" fill="#e8e8e8"/>
<rect x="915.5999999999999" y="107.2" width="1.8" height="1.8" fill="#e8e8e8"/>
<rect x="914.0" y="109.2" width="1.8" height="1.8" fill="#e8e8e8"/>
<rect x="911.8" y="110.6" width="1.8" height="1.8" fill="#e8e8e8"/>
<rect x="921.2" y="97.3" width="17.6" height="17.2" fill="#3a3a3a" stroke="#333" stroke-width="0.6"/><rect x="924" y="100" width="5.6" height="5.6" fill="#43535a"/><rect x="927.9" y="103.7" width="8.2" height="8.2" fill="#40565c"/>
<rect x="954.4" y="100.6" width="7.4" height="7.2" fill="none" stroke="#35b0c3" stroke-width="1.2" stroke-dasharray="2.2 1.4"/>
<polygon points="960.80,102.80 960.80,111.64 962.88,109.66 964.54,113.41 966.16,112.68 964.54,109.14 967.35,109.14" fill="#c9c9c9" stroke="#444444" stroke-width="0.5" />
<rect x="982.3" y="97.9" width="15.7" height="15.8" fill="#3d3d3d"/>
<rect x="1001.3" y="97.9" width="15.7" height="15.8" fill="#3d3d3d"/>
<rect x="1020.2" y="97.9" width="15.7" height="15.8" fill="#3d3d3d"/>
<rect x="987.6" y="100" width="8.6" height="8.4" fill="#c9c9c9"/><rect x="983.4" y="103" width="9.9" height="9.4" fill="#3d3d3d"/><rect x="984.1" y="103.7" width="8.5" height="8" fill="#c9c9c9"/><rect x="989.2" y="103.7" width="3.4" height="3.2" fill="#e6e6e6"/><rect x="988.3" y="103" width="0.9" height="4.8" fill="#3d3d3d"/><rect x="988.3" y="106.9" width="5" height="0.9" fill="#3d3d3d"/>
<rect x="1007.2" y="100.5" width="7.2" height="7" fill="none" stroke="#c9c9c9" stroke-width="1.1"/><rect x="1002.4" y="103" width="9" height="9.4" fill="#3d3d3d"/><rect x="1003.1" y="103.7" width="7.6" height="8" fill="#c9c9c9"/>
<rect x="1022.4" y="100.5" width="11" height="11" fill="none" stroke="#c9c9c9" stroke-width="1.1"/><circle cx="1025.8" cy="103.6" r="1.7" fill="#c9c9c9"/><path d="M1026.6 104.6 L1031.6 109.6" stroke="#c9c9c9" stroke-width="1.6"/>
<circle cx="1059.1" cy="105.8" r="6.1" fill="#c9c9c9"/><line x1="1061.20" y1="106.45" x2="1061.38" y2="111.67" stroke="#444444" stroke-width="0.9"/><line x1="1059.59" y1="107.95" x2="1055.16" y2="110.71" stroke="#444444" stroke-width="0.9"/><line x1="1057.49" y1="107.30" x2="1052.87" y2="104.84" stroke="#444444" stroke-width="0.9"/><line x1="1057.00" y1="105.15" x2="1056.82" y2="99.93" stroke="#444444" stroke-width="0.9"/><line x1="1058.61" y1="103.65" x2="1063.04" y2="100.89" stroke="#444444" stroke-width="0.9"/><line x1="1060.71" y1="104.30" x2="1065.33" y2="106.76" stroke="#444444" stroke-width="0.9"/><circle cx="1059.1" cy="105.8" r="1.9" fill="#444444"/>
<rect x="1118.8" y="99.9" width="6.5" height="12" fill="#c9c9c9"/><circle cx="1118.8" cy="105.9" r="4.1" fill="#444444"/><path d="M1118.8 101.8 A4.1 4.1 0 0 0 1118.8 110 Z" fill="#c9c9c9"/>
</svg>
</body></html>
